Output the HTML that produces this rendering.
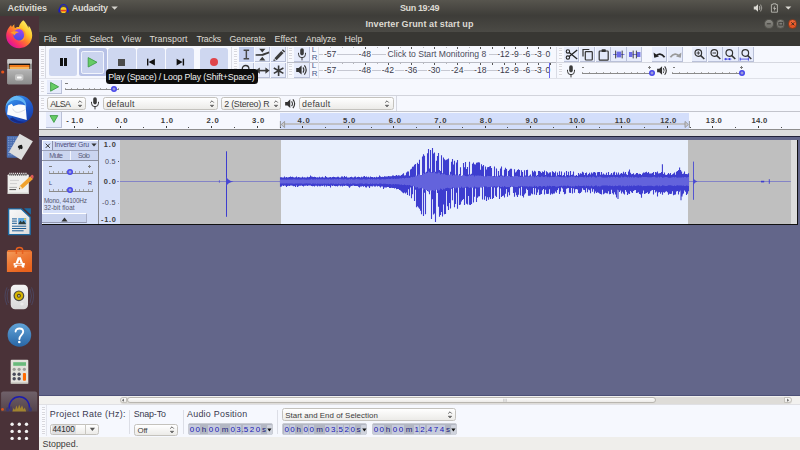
<!DOCTYPE html>
<html><head><meta charset="utf-8"><style>
*{box-sizing:border-box;margin:0;padding:0}
html,body{width:800px;height:450px;overflow:hidden;background:#63668a;font-family:"Liberation Sans",sans-serif;}
.a{position:absolute}
.t{white-space:nowrap}
#top{left:0;top:0;width:800px;height:16px;background:linear-gradient(#57554e,#3d3c38)}
#dock{left:0;top:16px;width:38.9px;height:434px;background:#4a3238}
#title{left:39px;top:16px;width:761px;height:16px;background:linear-gradient(#3e3d39,#4b4a45)}
#menu{left:39px;top:32px;width:761px;height:13.7px;background:#383733}
#tb{left:39px;top:45.7px;width:761px;height:66.3px;background:#f6f8fe}
.btn{position:absolute;background:#ced7f0;border-radius:2.5px}
.tbtn{position:absolute;background:#e7ecfb;border-right:1px solid #b9c0d8;border-bottom:1px solid #b9c0d8;width:15.3px;height:15px}
.grab{position:absolute;width:3.2px;margin-left:0.5px;background:repeating-linear-gradient(#d8d8de 0,#d8d8de 1px,#fbfbfe 1px,#fbfbfe 2.4px)}
#tl{left:39px;top:112px;width:761px;height:18px;background:#f6f8fe}
#tracks{left:39px;top:137px;width:761px;height:259px;background:#63668a}
#bot{left:39px;top:404px;width:761px;height:33px;background:#f6f8fe}
#status{left:39px;top:437px;width:761px;height:13px;background:#efeeeb}
.combo{position:absolute;border:1px solid #c4c2bd;border-radius:2.5px;background:linear-gradient(#ffffff,#ecebe8)}
.tc{position:absolute;background:#b9bdca;border-radius:1px}
</style></head><body>
<div class="a" id="top"></div>
<span class="a t" style="left:7.50px;top:4.00px;font-size:9px;line-height:9px;letter-spacing:-0.057px;color:#dddbd4;font-weight:bold;">Activities</span>
<span class="a t" style="left:71.80px;top:4.00px;font-size:9px;line-height:9px;letter-spacing:-0.258px;color:#dddbd4;font-weight:bold;">Audacity</span>
<span class="a t" style="left:400.00px;top:3.80px;font-size:9px;line-height:9px;letter-spacing:-0.390px;color:#dddbd4;font-weight:bold;">Sun 19:49</span>
<div class="a" id="dock"></div>
<svg class="a" style="left:0;top:0" width="40" height="450" viewBox="0 0 40 450"><defs>
<linearGradient id="ffg" x1="0.92" y1="0.12" x2="0.22" y2="0.95"><stop offset="0" stop-color="#fff36a"/><stop offset="0.32" stop-color="#ffc52a"/><stop offset="0.55" stop-color="#ff7a2e"/><stop offset="0.78" stop-color="#fb3560"/><stop offset="1" stop-color="#dc10a0"/></linearGradient>
<linearGradient id="ffb" x1="0.6" y1="0" x2="0.4" y2="1"><stop offset="0" stop-color="#a440f4"/><stop offset="1" stop-color="#4050e4"/></linearGradient>
<linearGradient id="fil" x1="0" y1="0" x2="0" y2="1"><stop offset="0" stop-color="#b4b4b4"/><stop offset="1" stop-color="#8c8c8c"/></linearGradient>
<linearGradient id="tbd" x1="0.2" y1="0" x2="0.8" y2="1"><stop offset="0" stop-color="#3a9af0"/><stop offset="0.45" stop-color="#2462d2"/><stop offset="1" stop-color="#1438a4"/></linearGradient>
<linearGradient id="sw" x1="0" y1="0" x2="0.6" y2="1"><stop offset="0" stop-color="#f4a060"/><stop offset="0.5" stop-color="#ee7a36"/><stop offset="1" stop-color="#e8621c"/></linearGradient>
<linearGradient id="hlp" x1="0" y1="0" x2="0" y2="1"><stop offset="0" stop-color="#62a4d8"/><stop offset="1" stop-color="#2866a6"/></linearGradient>
<linearGradient id="act" x1="0" y1="0" x2="0" y2="1"><stop offset="0" stop-color="#70616a"/><stop offset="1" stop-color="#54434a"/></linearGradient>
<linearGradient id="doc" x1="0" y1="0" x2="1" y2="1"><stop offset="0" stop-color="#fafafa"/><stop offset="1" stop-color="#dcdcdc"/></linearGradient>
<linearGradient id="rb" x1="0" y1="0" x2="0" y2="1"><stop offset="0" stop-color="#f4f4f4"/><stop offset="1" stop-color="#d8d8d8"/></linearGradient>
</defs><g transform="translate(0,16)"><path d="M11.1 8.9 C8.6 11.2 6.2 15 6.2 19.8 C6.2 26.8 11.9 32.2 19.2 32.2 C26.6 32.2 32.2 26.8 32.2 19.6 C32.2 15.2 30.6 11.8 28.4 9.6 C28.7 10.6 28.7 11.4 28.5 12 C27.2 9 25.4 6.2 23.3 4.3 C21.4 5.8 19.4 8.4 18.9 11 C17.4 10.8 16 11.3 15 12.2 C14.3 11 14.1 9.6 14.5 8.2 C13.3 8.9 12.5 9.8 12 10.9 C11.4 10.3 11.1 9.6 11.1 8.9Z" fill="url(#ffg)"/><circle cx="19" cy="18.8" r="5.7" fill="url(#ffb)"/><path d="M10.4 17 C12.4 15 16.4 14.8 19 16.6 C17 16.8 15.4 17.8 14.4 19.4 C13.6 18 12.2 17.2 10.4 17Z" fill="#ff9c2c"/><path d="M19.6 12.6 C22.6 12.2 25.6 14.6 25.8 18.6 C25.9 22.6 23.4 25.2 20 25.6 C23 24 24.4 21.6 24 18.6 C23.7 15.8 22 13.6 19.6 12.6Z" fill="#ff9a2e" opacity="0.85"/></g><g transform="translate(0,52)"><rect x="7.3" y="6.9" width="24.6" height="25.4" rx="1.2" fill="#9a9a9a"/><rect x="7.3" y="6.9" width="24.6" height="5" rx="1.2" fill="#cacaca"/><rect x="8.9" y="11.6" width="21.2" height="6" fill="#1c1410"/><rect x="9.5" y="13" width="20" height="2" fill="#f07a1c"/><rect x="9.5" y="15" width="20" height="2.2" fill="#f4b45c"/><rect x="7.3" y="17.4" width="24.6" height="14.9" rx="1" fill="url(#fil)"/><rect x="7.3" y="17.3" width="24.6" height="0.8" fill="#d0d0d8"/><rect x="15" y="22.2" width="8.4" height="6.2" rx="1.6" fill="#c2c2c2"/><rect x="17" y="24.4" width="4.6" height="2" rx="0.6" fill="#fafafa"/><circle cx="2.7" cy="20" r="1.6" fill="#e8541c"/></g><g transform="translate(0,89)"><circle cx="19.3" cy="20.6" r="14" fill="url(#tbd)"/><path d="M16.5 6.8 C10 8 6.2 13 5.6 18 C8 12.6 13 10.4 18 11.2 C22 11.8 25 14.4 26 18.4 C27.2 14 24 8 16.5 6.8Z" fill="#6cc0f8" opacity="0.85"/><path d="M9.5 29.8 C13 33.6 20 35.4 25.4 32.8 C21 33 16 31.6 12.6 28.6Z" fill="#16267e" opacity="0.85"/><path d="M8.2 16.6 L11.6 14.8 L13.4 17.2 C17 15.2 22 15 25.6 16.6 L26.8 31 L7 25.6Z" fill="#fbfbfd"/><path d="M12.6 19.6 C15 24.4 18 24.6 25.6 20.4" stroke="#c0c6d6" stroke-width="0.6" fill="none"/></g><g transform="translate(0,127)"><rect x="6.8" y="9" width="12" height="21.8" rx="0.8" fill="#4a6cae"/><path d="M8 11h9M8 13.4h9M8 15.8h9M8 18.2h9M8 20.6h9M8 23h9M8 25.4h9M8 27.8h9" stroke="#8aa4d4" stroke-width="0.9" stroke-dasharray="1.4 1"/><path d="M19.6 6.7 L32.9 14.2 L21.3 32.9 L8.9 25.3Z" fill="#dedede"/><path d="M20.6 17.4 C22.6 19 23.4 20 22.6 21.2 C22 21.9 21.2 21.8 20.7 21.3 L21.2 22.8 H19.6 L20.1 21.3 C19.6 21.8 18.6 21.9 18.1 21.1 C17.5 19.9 18.8 18.8 20.6 17.4Z" fill="#1a1a1a" transform="rotate(28 20.4 20)"/></g><g transform="translate(0,164)"><rect x="7.6" y="10.4" width="21.2" height="19.6" rx="0.8" fill="#efefed"/><rect x="7.6" y="28.6" width="21.2" height="1.4" fill="#cfcfcb"/><path d="M9.4 10.6H27" stroke="#555" stroke-width="2.2" stroke-dasharray="1 0.9"/><path d="M9.4 9.4H27" stroke="#f4f4f4" stroke-width="1.2" stroke-dasharray="1 0.9"/><path d="M10 16.4H19M10 19.6H17" stroke="#cfcfcf" stroke-width="1"/><path d="M9.4 23.4H17" stroke="#9a9a9a" stroke-width="0.7"/><path d="M9.4 25.6H16" stroke="#3a3a3a" stroke-width="0.9"/><path d="M19 25.2 L20 21.8 L30.2 12.2 L33 15 L22.6 24.4Z" fill="#f0a22e"/><path d="M30.2 12.2 L31.6 11 C32.6 10.4 34 11.8 33.6 13 L33 15Z" fill="#e05a5a"/><path d="M19 25.2 L20 21.8 L22.6 24.4Z" fill="#f4e2c0"/><path d="M19 25.2 L19.4 24 L20.2 24.8Z" fill="#111"/></g><g transform="translate(0,202)"><path d="M8.6 6.9 H21.4 L30.2 15.2 V32.6 H8.6Z" fill="url(#doc)" stroke="#1c6aa2" stroke-width="1.4" stroke-linejoin="round"/><path d="M24 6.3 H30.9 V12.8Z" fill="#1c6aa2"/><path d="M12 16.9H16.9M12 19.1H16.9M12 21.3H16.9" stroke="#1c5c94" stroke-width="1"/><rect x="18.2" y="16" width="8" height="6.2" fill="#5aa4dc"/><path d="M18.2 22.2 L20.4 18.6 L22 20.6 L23.6 18.4 L26.2 22.2Z" fill="#2a3a3a"/><circle cx="25" cy="17.2" r="0.9" fill="#f4d43a"/><path d="M12 24.2H26.2M12 26.5H26.2M12 28.8H23.6" stroke="#1c5c94" stroke-width="1"/></g><g transform="translate(0,239)"><path d="M8 11.2 H30.2 L32 13 V33.1 H6.9 V13Z" fill="url(#sw)"/><path d="M8 11.2 H30.2 L32 13 H6.9Z" fill="#e8702c"/><path d="M16.4 15 V10.8 C16.4 7.6 22.6 7.6 22.6 10.8 V15" stroke="#e8601e" stroke-width="1.5" fill="none"/><path d="M17.8 18.2 H20.8 L24.6 28.6 H22 L19.3 20.6 L16.6 28.6 H14Z" fill="#fff"/><rect x="13.6" y="24" width="11.2" height="2.6" fill="#fff"/><rect x="15.4" y="24.8" width="6.4" height="0.9" fill="#ea6a24"/></g><g transform="translate(0,277)"><path d="M8.6 12 Q5.6 19 8.6 26 M7 10.4 Q3 19 7 28" stroke="#4c4e6e" stroke-width="0.7" fill="none"/><path d="M30 12 Q33 19 30 26 M31.6 10.4 Q35.6 19 31.6 28" stroke="#4c4e6e" stroke-width="0.7" fill="none"/><rect x="10.7" y="7.8" width="17.3" height="24.4" rx="4.4" fill="url(#rb)"/><circle cx="18.9" cy="18.8" r="5.4" fill="#4a4a48"/><circle cx="18.9" cy="18.8" r="4.2" fill="#d8b600"/><circle cx="18.9" cy="18.8" r="2" fill="#5a4c10"/><circle cx="18.9" cy="18.8" r="0.9" fill="#c4c4c4"/><circle cx="22" cy="27" r="1.6" fill="#ececec"/></g><g transform="translate(0,315)"><circle cx="19.4" cy="20" r="11.8" fill="url(#hlp)"/><path d="M15.6 16.6 C15.6 12.4 23.2 12.4 23.2 16.8 C23.2 19.6 19.6 20.4 19.4 24" stroke="#fff" stroke-width="1.9" fill="none" stroke-linecap="round"/><circle cx="19.3" cy="27" r="1.3" fill="#fff"/></g><g transform="translate(0,352)"><rect x="10.7" y="7.8" width="17.6" height="24" rx="1" fill="#e4e2dc"/><rect x="10.7" y="30.6" width="17.6" height="1.2" rx="0.6" fill="#bab8b0"/><rect x="13.2" y="10.2" width="12.8" height="3.6" fill="#6aba7c"/><circle cx="14.2" cy="17.3" r="1.6" fill="#9c9c98"/><circle cx="19.1" cy="17.3" r="1.6" fill="#9c9c98"/><circle cx="24.4" cy="17.3" r="1.6" fill="#9c9c98"/><circle cx="14.2" cy="22.2" r="1.7" fill="#4a4a5a"/><circle cx="19.1" cy="22.2" r="1.7" fill="#4a4a5a"/><circle cx="14.2" cy="26.8" r="1.7" fill="#4a4a5a"/><circle cx="19.1" cy="26.8" r="1.7" fill="#4a4a5a"/><rect x="22.9" y="20.9" width="3.1" height="7.8" rx="0.9" fill="#ff6a00"/></g><path d="M1.1 393.6 Q1.1 391.4 3.3 391.4 H35 Q37.2 391.4 37.2 393.6 V411.6 H1.1Z" fill="url(#act)"/><path d="M9 409 C9 392.6 29.6 392.6 29.6 409" stroke="#1c1cae" stroke-width="1.5" fill="none"/><ellipse cx="7.8" cy="409.4" rx="1.8" ry="2.2" fill="#3a3870"/><ellipse cx="30.2" cy="409.4" rx="1.8" ry="2.2" fill="#3a3870"/><path d="M12.4 411.6 L13.6 408 L15 410 L16.4 405.6 L17.8 409 L19.2 404.4 L20.6 408.6 L22 405.2 L23.6 409.6 L24.8 407.6 L26.2 411.6Z" fill="#a88a2c" opacity="0.92"/><path d="M11 406.4 V411.6" stroke="#2a2a8a" stroke-width="0.8"/><circle cx="2.5" cy="409.4" r="1.4" fill="#d8541c"/><circle cx="12.1" cy="424.3" r="1.7" fill="#f4f4f4"/><circle cx="19.3" cy="424.3" r="1.7" fill="#f4f4f4"/><circle cx="26.5" cy="424.3" r="1.7" fill="#f4f4f4"/><circle cx="12.1" cy="431.4" r="1.7" fill="#f4f4f4"/><circle cx="19.3" cy="431.4" r="1.7" fill="#f4f4f4"/><circle cx="26.5" cy="431.4" r="1.7" fill="#f4f4f4"/><circle cx="12.1" cy="438.4" r="1.7" fill="#f4f4f4"/><circle cx="19.3" cy="438.4" r="1.7" fill="#f4f4f4"/><circle cx="26.5" cy="438.4" r="1.7" fill="#f4f4f4"/></svg>
<div class="a" id="title"></div>
<span class="a t" style="left:365.40px;top:19.60px;font-size:9px;line-height:9px;letter-spacing:0.079px;color:#dedbd3;font-weight:bold;">Inverter Grunt at start up</span>
<div class="a" id="menu"></div>
<span class="a t" style="left:43.70px;top:34.70px;font-size:8.8px;line-height:8.8px;letter-spacing:-0.293px;color:#dedbd3;font-weight:normal;">File</span>
<span class="a t" style="left:65.60px;top:34.70px;font-size:8.8px;line-height:8.8px;letter-spacing:-0.005px;color:#dedbd3;font-weight:normal;">Edit</span>
<span class="a t" style="left:89.60px;top:34.70px;font-size:8.8px;line-height:8.8px;letter-spacing:-0.212px;color:#dedbd3;font-weight:normal;">Select</span>
<span class="a t" style="left:121.70px;top:34.70px;font-size:8.8px;line-height:8.8px;letter-spacing:0.195px;color:#dedbd3;font-weight:normal;">View</span>
<span class="a t" style="left:149.40px;top:34.70px;font-size:8.8px;line-height:8.8px;letter-spacing:0.096px;color:#dedbd3;font-weight:normal;">Transport</span>
<span class="a t" style="left:196.40px;top:34.70px;font-size:8.8px;line-height:8.8px;letter-spacing:-0.255px;color:#dedbd3;font-weight:normal;">Tracks</span>
<span class="a t" style="left:229.60px;top:34.70px;font-size:8.8px;line-height:8.8px;letter-spacing:-0.084px;color:#dedbd3;font-weight:normal;">Generate</span>
<span class="a t" style="left:274.50px;top:34.70px;font-size:8.8px;line-height:8.8px;letter-spacing:0.032px;color:#dedbd3;font-weight:normal;">Effect</span>
<span class="a t" style="left:305.70px;top:34.70px;font-size:8.8px;line-height:8.8px;letter-spacing:-0.135px;color:#dedbd3;font-weight:normal;">Analyze</span>
<span class="a t" style="left:344.50px;top:34.70px;font-size:8.8px;line-height:8.8px;letter-spacing:-0.100px;color:#dedbd3;font-weight:normal;">Help</span>
<div class="a" id="tb"></div>
<div class="grab" style="left:40.6px;top:48.5px;height:27px"></div>
<div class="a" style="left:45.2px;top:46.2px;width:0.8px;height:31.5px;background:#d6d8e0"></div>
<div class="btn" style="left:49px;top:48px;width:28.1px;height:28px"></div>
<div class="btn" style="left:78.8px;top:48px;width:28.1px;height:28px;background:#b7c1e6"></div>
<div class="a" style="left:81.2px;top:50.7px;width:22.8px;height:23px;background:#cbd4ef;border:1.1px solid #f2f5fd;border-radius:2.2px"></div>
<div class="btn" style="left:107.9px;top:48px;width:28.1px;height:28px"></div>
<div class="btn" style="left:136.9px;top:48px;width:28.1px;height:28px"></div>
<div class="btn" style="left:166.1px;top:48px;width:28.1px;height:28px"></div>
<div class="btn" style="left:200px;top:48px;width:28.1px;height:28px"></div>
<div class="a" style="left:59.5px;top:58px;width:3px;height:8px;background:#111"></div>
<div class="a" style="left:64.1px;top:58px;width:3px;height:8px;background:#111"></div>
<svg class="a" style="left:86.3px;top:56px" width="14" height="13" viewBox="0 0 14 13"><path d="M2.2 1.6 L11 6.3 L2.2 11 Z" fill="#66cc66" stroke="#3f9d48" stroke-width="0.9" stroke-linejoin="round"/></svg>
<div class="a" style="left:118px;top:58.7px;width:7px;height:7px;background:#4c4c4c"></div>
<svg class="a" style="left:145px;top:57px" width="12" height="10" viewBox="0 0 12 10"><rect x="2" y="1.7" width="1.4" height="6.8" fill="#111"/><path d="M3.6 5.1 L9.9 1.7 L9.9 8.5 Z" fill="#111"/></svg>
<svg class="a" style="left:174px;top:57px" width="12" height="10" viewBox="0 0 12 10"><rect x="8.7" y="1.7" width="1.4" height="6.8" fill="#111"/><path d="M8.6 5.1 L2.6 1.7 L2.6 8.5 Z" fill="#111"/></svg>
<div class="a" style="left:210px;top:58.1px;width:8px;height:8px;border-radius:50%;background:#e0454a"></div>
<div class="a" style="left:39px;top:77.7px;width:193px;height:1px;background:#e2e4ec"></div>
<div class="a" style="left:231.2px;top:46.5px;width:1px;height:31.5px;background:#d9dbe4"></div>
<div class="grab" style="left:233.2px;top:48.5px;height:27px"></div>
<div class="tbtn" style="left:239px;top:46.8px;background:#c3ceee;border-color:#c3ceee"></div>
<div class="tbtn" style="left:254.8px;top:46.8px"></div>
<div class="tbtn" style="left:270.6px;top:46.8px"></div>
<div class="tbtn" style="left:239px;top:62.7px"></div>
<div class="tbtn" style="left:254.8px;top:62.7px"></div>
<div class="tbtn" style="left:270.6px;top:62.7px"></div>
<svg class="a" style="left:239px;top:46.8px" width="15" height="15" viewBox="0 0 15 15"><path d="M4.6 3.3 H10.1 M4.6 11.7 H10.1 M7.35 3.3 V11.7" stroke="#484848" stroke-width="1.45" fill="none"/></svg>
<svg class="a" style="left:254.8px;top:46.8px" width="15" height="15" viewBox="0 0 15 15"><path d="M4.2 1.8 H10.4 L7.3 5.4 Z M4.2 13.4 H10.4 L7.3 9.8 Z" fill="#3a3a3a"/><path d="M0.6 8 L8 7.8" stroke="#3a3a3a" stroke-width="1.7" fill="none"/><path d="M7.4 6.8 L14 4.6 L14.3 6.2 L8 8.8Z" fill="#3a3a3a"/></svg>
<svg class="a" style="left:270.6px;top:46.8px" width="15" height="15" viewBox="0 0 15 15"><path d="M3.4 11.2 L10.2 3.9 L12.6 6.1 L5.6 13.2 Z" fill="#3c3c3c"/><path d="M10.8 3.3 L11.9 2.2 L14.2 4.4 L13.2 5.5Z" fill="#3c3c3c"/><path d="M2.9 11.9 L2.3 14 L4.8 13.6Z" fill="#3c3c3c"/></svg>
<svg class="a" style="left:239px;top:62.7px" width="15" height="15" viewBox="0 0 15 15"><circle cx="6.6" cy="5.8" r="3.3" stroke="#333" stroke-width="1.3" fill="none"/><path d="M9 8.4 L12.5 12.3" stroke="#333" stroke-width="1.7"/></svg>
<svg class="a" style="left:254.8px;top:62.7px" width="15" height="15" viewBox="0 0 15 15"><path d="M2.4 7.6 H12.8" stroke="#3a3a3a" stroke-width="1.6"/><path d="M0.6 7.6 L4.8 4.4 V10.8Z M14.6 7.6 L10.4 4.4 V10.8Z" fill="#3a3a3a"/></svg>
<svg class="a" style="left:270.6px;top:62.7px" width="15" height="15" viewBox="0 0 15 15"><path d="M7.6 2.4 V13 M2.8 5 L12.4 10.4 M12.4 5 L2.8 10.4" stroke="#3a3a3a" stroke-width="1.6" fill="none"/></svg>
<div class="a" style="left:287.3px;top:46.5px;width:1px;height:31.5px;background:#d9dbe4"></div>
<div class="a" style="left:287.3px;top:62px;width:269px;height:1px;background:#b9bbc4"></div>
<div class="a" style="left:287.3px;top:78px;width:269px;height:1px;background:#dcdee6"></div>
<div class="a" style="left:555.9px;top:46.5px;width:1px;height:31.5px;background:#d9dbe4"></div>
<div class="grab" style="left:288.8px;top:48.3px;height:12px"></div>
<div class="tbtn" style="left:293.8px;top:46.8px;width:16px;height:15px;background:#e6ebfb"></div>
<div class="grab" style="left:288.8px;top:64.2px;height:12px"></div>
<div class="tbtn" style="left:293.8px;top:62.7px;width:16px;height:15px;background:#e6ebfb"></div>
<svg class="a" style="left:295.7px;top:48.2px" width="12" height="13" viewBox="0 0 12 13"><rect x="4.2" y="0.2" width="3.6" height="7.2" rx="1.8" fill="#3a3a3a"/><path d="M2.5 4.8 v1.4 a3.5 3.5 0 0 0 7 0 v-1.4" stroke="#3a3a3a" stroke-width="1" fill="none"/><path d="M6 9.6 v2.8" stroke="#3a3a3a" stroke-width="1"/></svg>
<svg class="a" style="left:295.1px;top:64.4px" width="13.0" height="12.0" viewBox="0 0 13 12"><path d="M1.2 4.1 H3.6 L6.6 1.4 V10.6 L3.6 7.9 H1.2Z" fill="#333"/><path d="M8 3.4 Q9.8 6 8 8.6" stroke="#333" stroke-width="1.1" fill="none"/><path d="M9.4 1.4 Q13 6 9.4 10.6" stroke="#333" stroke-width="1.2" fill="none"/></svg>
<span class="a t" style="left:311.80px;top:46.14px;font-size:7.9px;line-height:7.9px;letter-spacing:-1.094px;color:#4a5a8a;font-weight:normal;">L</span>
<span class="a t" style="left:311.80px;top:54.34px;font-size:7.9px;line-height:7.9px;letter-spacing:-1.405px;color:#4a5a8a;font-weight:normal;">R</span>
<span class="a t" style="left:311.80px;top:62.04px;font-size:7.9px;line-height:7.9px;letter-spacing:-1.094px;color:#4a5a8a;font-weight:normal;">L</span>
<span class="a t" style="left:311.80px;top:70.24px;font-size:7.9px;line-height:7.9px;letter-spacing:-1.405px;color:#4a5a8a;font-weight:normal;">R</span>
<div class="a" style="left:317.6px;top:46.8px;width:1px;height:31px;background:#e3e5ec"></div>
<div class="a" style="left:318.5px;top:54.099999999999994px;width:231.5px;height:1px;background:#c6c8d2"></div>
<div class="a" style="left:330.2px;top:47.3px;width:0.8px;height:1.0px;background:#b4b4b8"></div>
<div class="a" style="left:341.8px;top:47.3px;width:0.8px;height:1.0px;background:#b4b4b8"></div>
<div class="a" style="left:353.4px;top:47.3px;width:0.8px;height:1.0px;background:#b4b4b8"></div>
<div class="a" style="left:364.9px;top:47.3px;width:0.8px;height:1.4px;background:#555"></div>
<div class="a" style="left:376.5px;top:47.3px;width:0.8px;height:1.0px;background:#b4b4b8"></div>
<div class="a" style="left:388.0px;top:47.3px;width:0.8px;height:1.4px;background:#555"></div>
<div class="a" style="left:399.6px;top:47.3px;width:0.8px;height:1.0px;background:#b4b4b8"></div>
<div class="a" style="left:411.1px;top:47.3px;width:0.8px;height:1.4px;background:#555"></div>
<div class="a" style="left:422.7px;top:47.3px;width:0.8px;height:1.0px;background:#b4b4b8"></div>
<div class="a" style="left:434.2px;top:47.3px;width:0.8px;height:1.4px;background:#555"></div>
<div class="a" style="left:445.8px;top:47.3px;width:0.8px;height:1.0px;background:#b4b4b8"></div>
<div class="a" style="left:457.3px;top:47.3px;width:0.8px;height:1.4px;background:#555"></div>
<div class="a" style="left:468.9px;top:47.3px;width:0.8px;height:1.0px;background:#b4b4b8"></div>
<div class="a" style="left:480.4px;top:47.3px;width:0.8px;height:1.4px;background:#555"></div>
<div class="a" style="left:492.0px;top:47.3px;width:0.8px;height:1.4px;background:#555"></div>
<div class="a" style="left:503.5px;top:47.3px;width:0.8px;height:1.4px;background:#555"></div>
<div class="a" style="left:515.1px;top:47.3px;width:0.8px;height:1.4px;background:#555"></div>
<div class="a" style="left:526.6px;top:47.3px;width:0.8px;height:1.4px;background:#555"></div>
<div class="a" style="left:538.2px;top:47.3px;width:0.8px;height:1.4px;background:#555"></div>
<div class="a" style="left:549.7px;top:47.3px;width:0.8px;height:1.4px;background:#555"></div>
<div class="a" style="left:323.3px;top:50.8px;width:13.6px;height:7px;background:#f6f8fe"></div>
<span class="a t" style="left:323.94px;top:50.20px;font-size:8.6px;line-height:8.6px;letter-spacing:0.000px;color:#3a3a4a;font-weight:normal;">-57</span>
<div class="a" style="left:358.0px;top:50.8px;width:13.6px;height:7px;background:#f6f8fe"></div>
<span class="a t" style="left:358.59px;top:50.20px;font-size:8.6px;line-height:8.6px;letter-spacing:0.000px;color:#3a3a4a;font-weight:normal;">-48</span>
<div class="a" style="left:496.6px;top:50.8px;width:13.6px;height:7px;background:#f6f8fe"></div>
<span class="a t" style="left:497.19px;top:50.20px;font-size:8.6px;line-height:8.6px;letter-spacing:0.000px;color:#3a3a4a;font-weight:normal;">-12</span>
<div class="a" style="left:510.5px;top:50.8px;width:8.8px;height:7px;background:#f6f8fe"></div>
<span class="a t" style="left:511.13px;top:50.20px;font-size:8.6px;line-height:8.6px;letter-spacing:0.000px;color:#3a3a4a;font-weight:normal;">-9</span>
<div class="a" style="left:522.1px;top:50.8px;width:8.8px;height:7px;background:#f6f8fe"></div>
<span class="a t" style="left:522.68px;top:50.20px;font-size:8.6px;line-height:8.6px;letter-spacing:0.000px;color:#3a3a4a;font-weight:normal;">-6</span>
<div class="a" style="left:533.6px;top:50.8px;width:8.8px;height:7px;background:#f6f8fe"></div>
<span class="a t" style="left:534.23px;top:50.20px;font-size:8.6px;line-height:8.6px;letter-spacing:0.000px;color:#3a3a4a;font-weight:normal;">-3</span>
<div class="a" style="left:544.9px;top:50.8px;width:6.0px;height:7px;background:#f6f8fe"></div>
<span class="a t" style="left:545.51px;top:50.20px;font-size:8.6px;line-height:8.6px;letter-spacing:-0.000px;color:#3a3a4a;font-weight:normal;">0</span>
<div class="a" style="left:318.5px;top:70.0px;width:231.5px;height:1px;background:#c6c8d2"></div>
<div class="a" style="left:330.2px;top:63.2px;width:0.8px;height:1.0px;background:#b4b4b8"></div>
<div class="a" style="left:341.8px;top:63.2px;width:0.8px;height:1.0px;background:#b4b4b8"></div>
<div class="a" style="left:353.4px;top:63.2px;width:0.8px;height:1.0px;background:#b4b4b8"></div>
<div class="a" style="left:364.9px;top:63.2px;width:0.8px;height:1.4px;background:#555"></div>
<div class="a" style="left:376.5px;top:63.2px;width:0.8px;height:1.0px;background:#b4b4b8"></div>
<div class="a" style="left:388.0px;top:63.2px;width:0.8px;height:1.4px;background:#555"></div>
<div class="a" style="left:399.6px;top:63.2px;width:0.8px;height:1.0px;background:#b4b4b8"></div>
<div class="a" style="left:411.1px;top:63.2px;width:0.8px;height:1.4px;background:#555"></div>
<div class="a" style="left:422.7px;top:63.2px;width:0.8px;height:1.0px;background:#b4b4b8"></div>
<div class="a" style="left:434.2px;top:63.2px;width:0.8px;height:1.4px;background:#555"></div>
<div class="a" style="left:445.8px;top:63.2px;width:0.8px;height:1.0px;background:#b4b4b8"></div>
<div class="a" style="left:457.3px;top:63.2px;width:0.8px;height:1.4px;background:#555"></div>
<div class="a" style="left:468.9px;top:63.2px;width:0.8px;height:1.0px;background:#b4b4b8"></div>
<div class="a" style="left:480.4px;top:63.2px;width:0.8px;height:1.4px;background:#555"></div>
<div class="a" style="left:492.0px;top:63.2px;width:0.8px;height:1.4px;background:#555"></div>
<div class="a" style="left:503.5px;top:63.2px;width:0.8px;height:1.4px;background:#555"></div>
<div class="a" style="left:515.1px;top:63.2px;width:0.8px;height:1.4px;background:#555"></div>
<div class="a" style="left:526.6px;top:63.2px;width:0.8px;height:1.4px;background:#555"></div>
<div class="a" style="left:538.2px;top:63.2px;width:0.8px;height:1.4px;background:#555"></div>
<div class="a" style="left:549.7px;top:63.2px;width:0.8px;height:1.4px;background:#555"></div>
<div class="a" style="left:323.3px;top:66.7px;width:13.6px;height:7px;background:#f6f8fe"></div>
<span class="a t" style="left:323.94px;top:66.10px;font-size:8.6px;line-height:8.6px;letter-spacing:0.000px;color:#3a3a4a;font-weight:normal;">-57</span>
<div class="a" style="left:358.0px;top:66.7px;width:13.6px;height:7px;background:#f6f8fe"></div>
<span class="a t" style="left:358.59px;top:66.10px;font-size:8.6px;line-height:8.6px;letter-spacing:0.000px;color:#3a3a4a;font-weight:normal;">-48</span>
<div class="a" style="left:381.1px;top:66.7px;width:13.6px;height:7px;background:#f6f8fe"></div>
<span class="a t" style="left:381.69px;top:66.10px;font-size:8.6px;line-height:8.6px;letter-spacing:0.000px;color:#3a3a4a;font-weight:normal;">-42</span>
<div class="a" style="left:404.2px;top:66.7px;width:13.6px;height:7px;background:#f6f8fe"></div>
<span class="a t" style="left:404.79px;top:66.10px;font-size:8.6px;line-height:8.6px;letter-spacing:0.000px;color:#3a3a4a;font-weight:normal;">-36</span>
<div class="a" style="left:427.3px;top:66.7px;width:13.6px;height:7px;background:#f6f8fe"></div>
<span class="a t" style="left:427.89px;top:66.10px;font-size:8.6px;line-height:8.6px;letter-spacing:0.000px;color:#3a3a4a;font-weight:normal;">-30</span>
<div class="a" style="left:450.4px;top:66.7px;width:13.6px;height:7px;background:#f6f8fe"></div>
<span class="a t" style="left:450.99px;top:66.10px;font-size:8.6px;line-height:8.6px;letter-spacing:0.000px;color:#3a3a4a;font-weight:normal;">-24</span>
<div class="a" style="left:473.5px;top:66.7px;width:13.6px;height:7px;background:#f6f8fe"></div>
<span class="a t" style="left:474.09px;top:66.10px;font-size:8.6px;line-height:8.6px;letter-spacing:0.000px;color:#3a3a4a;font-weight:normal;">-18</span>
<div class="a" style="left:496.6px;top:66.7px;width:13.6px;height:7px;background:#f6f8fe"></div>
<span class="a t" style="left:497.19px;top:66.10px;font-size:8.6px;line-height:8.6px;letter-spacing:0.000px;color:#3a3a4a;font-weight:normal;">-12</span>
<div class="a" style="left:510.5px;top:66.7px;width:8.8px;height:7px;background:#f6f8fe"></div>
<span class="a t" style="left:511.13px;top:66.10px;font-size:8.6px;line-height:8.6px;letter-spacing:0.000px;color:#3a3a4a;font-weight:normal;">-9</span>
<div class="a" style="left:522.1px;top:66.7px;width:8.8px;height:7px;background:#f6f8fe"></div>
<span class="a t" style="left:522.68px;top:66.10px;font-size:8.6px;line-height:8.6px;letter-spacing:0.000px;color:#3a3a4a;font-weight:normal;">-6</span>
<div class="a" style="left:533.6px;top:66.7px;width:8.8px;height:7px;background:#f6f8fe"></div>
<span class="a t" style="left:534.23px;top:66.10px;font-size:8.6px;line-height:8.6px;letter-spacing:0.000px;color:#3a3a4a;font-weight:normal;">-3</span>
<div class="a" style="left:544.9px;top:66.7px;width:6.0px;height:7px;background:#f6f8fe"></div>
<span class="a t" style="left:545.51px;top:66.10px;font-size:8.6px;line-height:8.6px;letter-spacing:-0.000px;color:#3a3a4a;font-weight:normal;">0</span>
<div class="a" style="left:386px;top:50.5px;width:103px;height:7.5px;background:#f6f8fe"></div>
<span class="a t" style="left:387.60px;top:50.20px;font-size:8.6px;line-height:8.6px;letter-spacing:0.009px;color:#4a4a5a;font-weight:normal;">Click to Start Monitoring 8</span>
<div class="a" style="left:549.4px;top:63px;width:1px;height:14.8px;background:#6666f0"></div>
<div class="grab" style="left:558.4px;top:48.3px;height:12px"></div>
<div class="tbtn" style="left:564px;top:46.8px;height:15px;width:15.2px"></div>
<div class="tbtn" style="left:579.8px;top:46.8px;height:15px;width:15.2px"></div>
<div class="tbtn" style="left:595.6px;top:46.8px;height:15px;width:15.2px"></div>
<div class="tbtn" style="left:611.4px;top:46.8px;height:15px;width:15.2px"></div>
<div class="tbtn" style="left:627.2px;top:46.8px;height:15px;width:15.2px"></div>
<div class="tbtn" style="left:651.7px;top:46.8px;height:15px;width:15.2px"></div>
<div class="tbtn" style="left:667.5px;top:46.8px;height:15px;width:15.2px"></div>
<div class="tbtn" style="left:691.8px;top:46.8px;height:15px;width:15.2px"></div>
<div class="tbtn" style="left:707.6px;top:46.8px;height:15px;width:15.2px"></div>
<div class="tbtn" style="left:723.4px;top:46.8px;height:15px;width:15.2px"></div>
<div class="tbtn" style="left:739.2px;top:46.8px;height:15px;width:15.2px"></div>
<svg class="a" style="left:564px;top:46.8px" width="15" height="15" viewBox="0 0 15 15"><circle cx="3.9" cy="4.4" r="1.7" stroke="#222" stroke-width="1.1" fill="none"/><circle cx="3.9" cy="10.6" r="1.7" stroke="#222" stroke-width="1.1" fill="none"/><path d="M5.2 5.5 L13.2 12 M5.2 9.5 L13.2 3" stroke="#222" stroke-width="1.3" fill="none"/></svg>
<svg class="a" style="left:579.8px;top:46.8px" width="15" height="15" viewBox="0 0 15 15"><path d="M3 9.5 V2.5 H9.3" stroke="#333" stroke-width="1.2" fill="none"/><rect x="5.3" y="4.7" width="7" height="8.3" rx="0.8" stroke="#333" stroke-width="1.2" fill="#e3e9fa"/></svg>
<svg class="a" style="left:595.6px;top:46.8px" width="15" height="15" viewBox="0 0 15 15"><rect x="3.2" y="4" width="9" height="9.2" rx="0.8" stroke="#333" stroke-width="1.2" fill="#e3e9fa"/><rect x="5.6" y="2.2" width="4.2" height="2.8" rx="0.7" fill="#333"/></svg>
<svg class="a" style="left:611.4px;top:46.8px" width="15" height="15" viewBox="0 0 15 15"><path d="M2 7.5 H13.5" stroke="#5b5be0" stroke-width="0.8"/><rect x="5.6" y="4.6" width="4.6" height="5.8" fill="#6c6ce6"/><path d="M4.6 3.6 V11.4 M11.2 3.6 V11.4" stroke="#333" stroke-width="0.9"/></svg>
<svg class="a" style="left:627.2px;top:46.8px" width="15" height="15" viewBox="0 0 15 15"><rect x="2" y="5" width="3.4" height="5" fill="#6c6ce6"/><rect x="10" y="5" width="3.4" height="5" fill="#6c6ce6"/><path d="M5.4 7.5 H10" stroke="#5b5be0" stroke-width="0.8"/><path d="M6.2 3.6 V11.4 M9.4 3.6 V11.4" stroke="#333" stroke-width="0.9"/></svg>
<svg class="a" style="left:651.7px;top:46.8px" width="15" height="15" viewBox="0 0 15 15"><path d="M3.2 9.6 Q8 4.2 12.6 10.2" stroke="#222" stroke-width="1.8" fill="none"/><path d="M1.6 5.4 L2.2 10.8 L7 9.4Z" fill="#222"/></svg>
<svg class="a" style="left:667.5px;top:46.8px" width="15" height="15" viewBox="0 0 15 15"><path d="M11.8 9.6 Q7 4.2 2.4 10.2" stroke="#9a9a9a" stroke-width="1.8" fill="none"/><path d="M13.4 5.4 L12.8 10.8 L8 9.4Z" fill="#9a9a9a"/></svg>
<svg class="a" style="left:691.8px;top:46.8px" width="15" height="15" viewBox="0 0 15 15"><circle cx="6.3" cy="6" r="3.3" stroke="#333" stroke-width="1.2" fill="none"/><path d="M8.8 8.6 L12.3 12" stroke="#333" stroke-width="1.5"/><path d="M4.5 6 H8.1 M6.3 4.2 V7.8" stroke="#333" stroke-width="0.9"/></svg>
<svg class="a" style="left:707.6px;top:46.8px" width="15" height="15" viewBox="0 0 15 15"><circle cx="6.3" cy="6" r="3.3" stroke="#333" stroke-width="1.2" fill="none"/><path d="M8.8 8.6 L12.3 12" stroke="#333" stroke-width="1.5"/><path d="M4.5 6 H8.1" stroke="#333" stroke-width="1"/></svg>
<svg class="a" style="left:723.4px;top:46.8px" width="15" height="15" viewBox="0 0 15 15"><circle cx="6.3" cy="6" r="3.3" stroke="#333" stroke-width="1.2" fill="none"/><path d="M8.8 8.6 L12.3 12" stroke="#333" stroke-width="1.5"/><path d="M1 12.1 H8.4" stroke="#3838e0" stroke-width="0.7"/><path d="M4.2 12.1 L2.2 10.7 V13.5Z M5 12.1 L7.2 10.7 V13.5Z" fill="#3838e0"/></svg>
<svg class="a" style="left:739.2px;top:46.8px" width="15" height="15" viewBox="0 0 15 15"><circle cx="6.3" cy="6" r="3.3" stroke="#333" stroke-width="1.2" fill="none"/><path d="M8.8 8.6 L12.3 12" stroke="#333" stroke-width="1.5"/><path d="M1.2 12.1 H9.4" stroke="#3838e0" stroke-width="0.8"/><path d="M1.2 10.6 V13.6 M9.4 10.6 V13.6" stroke="#3838e0" stroke-width="0.9"/></svg>
<div class="a" style="left:556px;top:62px;width:244px;height:1px;background:#d6d8e0"></div>
<div class="a" style="left:232px;top:78.2px;width:568px;height:1px;background:#dfe1e8"></div>
<div class="grab" style="left:558.4px;top:64.2px;height:12px"></div>
<svg class="a" style="left:565.3px;top:65.3px" width="12" height="13" viewBox="0 0 12 13"><rect x="4.2" y="0.2" width="3.6" height="7.2" rx="1.8" fill="#3a3a3a"/><path d="M2.5 4.8 v1.4 a3.5 3.5 0 0 0 7 0 v-1.4" stroke="#3a3a3a" stroke-width="1" fill="none"/><path d="M6 9.6 v2.8" stroke="#3a3a3a" stroke-width="1"/></svg>
<div class="a" style="left:581.6px;top:73.4px;width:70.79999999999995px;height:1px;background:#8a8a8a"></div><div class="a" style="left:581.6px;top:72.0px;width:0.8px;height:1.4px;background:#a6a6a6"></div><div class="a" style="left:588.6px;top:72.0px;width:0.8px;height:1.4px;background:#a6a6a6"></div><div class="a" style="left:595.6px;top:72.0px;width:0.8px;height:1.4px;background:#a6a6a6"></div><div class="a" style="left:602.5px;top:72.0px;width:0.8px;height:1.4px;background:#a6a6a6"></div><div class="a" style="left:609.5px;top:72.0px;width:0.8px;height:1.4px;background:#a6a6a6"></div><div class="a" style="left:616.5px;top:72.0px;width:0.8px;height:1.4px;background:#a6a6a6"></div><div class="a" style="left:623.5px;top:72.0px;width:0.8px;height:1.4px;background:#a6a6a6"></div><div class="a" style="left:630.5px;top:72.0px;width:0.8px;height:1.4px;background:#a6a6a6"></div><div class="a" style="left:637.4px;top:72.0px;width:0.8px;height:1.4px;background:#a6a6a6"></div><div class="a" style="left:644.4px;top:72.0px;width:0.8px;height:1.4px;background:#a6a6a6"></div><div class="a" style="left:651.4px;top:72.0px;width:0.8px;height:1.4px;background:#a6a6a6"></div><div class="a" style="left:581.9px;top:67.0px;width:2.6px;height:0.8px;background:#7c7c7c"></div><div class="a" style="left:647.8px;top:67.0px;width:3px;height:0.8px;background:#7c7c7c"></div><div class="a" style="left:648.9px;top:65.8px;width:0.8px;height:3px;background:#7c7c7c"></div><div class="a" style="left:648.8px;top:70.10000000000001px;width:6px;height:6px;border-radius:50%;background:radial-gradient(circle,#9b9bd8 0,#9b9bd8 22%,#4747ec 45%,#4747ec 100%)"></div>
<svg class="a" style="left:655.52px;top:65.08px" width="11.96" height="11.040000000000001" viewBox="0 0 13 12"><path d="M1.2 4.1 H3.6 L6.6 1.4 V10.6 L3.6 7.9 H1.2Z" fill="#333"/><path d="M8 3.4 Q9.8 6 8 8.6" stroke="#333" stroke-width="1.1" fill="none"/><path d="M9.4 1.4 Q13 6 9.4 10.6" stroke="#333" stroke-width="1.2" fill="none"/></svg>
<div class="a" style="left:672.3px;top:73.4px;width:72.10000000000002px;height:1px;background:#8a8a8a"></div><div class="a" style="left:672.3px;top:72.0px;width:0.8px;height:1.4px;background:#a6a6a6"></div><div class="a" style="left:679.4px;top:72.0px;width:0.8px;height:1.4px;background:#a6a6a6"></div><div class="a" style="left:686.5px;top:72.0px;width:0.8px;height:1.4px;background:#a6a6a6"></div><div class="a" style="left:693.6px;top:72.0px;width:0.8px;height:1.4px;background:#a6a6a6"></div><div class="a" style="left:700.7px;top:72.0px;width:0.8px;height:1.4px;background:#a6a6a6"></div><div class="a" style="left:707.8px;top:72.0px;width:0.8px;height:1.4px;background:#a6a6a6"></div><div class="a" style="left:715.0px;top:72.0px;width:0.8px;height:1.4px;background:#a6a6a6"></div><div class="a" style="left:722.1px;top:72.0px;width:0.8px;height:1.4px;background:#a6a6a6"></div><div class="a" style="left:729.2px;top:72.0px;width:0.8px;height:1.4px;background:#a6a6a6"></div><div class="a" style="left:736.3px;top:72.0px;width:0.8px;height:1.4px;background:#a6a6a6"></div><div class="a" style="left:743.4px;top:72.0px;width:0.8px;height:1.4px;background:#a6a6a6"></div><div class="a" style="left:672.5999999999999px;top:67.0px;width:2.6px;height:0.8px;background:#7c7c7c"></div><div class="a" style="left:739.8px;top:67.0px;width:3px;height:0.8px;background:#7c7c7c"></div><div class="a" style="left:740.9px;top:65.8px;width:0.8px;height:3px;background:#7c7c7c"></div><div class="a" style="left:738.8px;top:70.10000000000001px;width:6px;height:6px;border-radius:50%;background:radial-gradient(circle,#9b9bd8 0,#9b9bd8 22%,#4747ec 45%,#4747ec 100%)"></div>
<div class="grab" style="left:40.6px;top:80.5px;height:12px"></div>
<div class="tbtn" style="left:46.8px;top:79.6px;width:15.2px;height:14.8px;background:#e6ebfb"></div>
<svg class="a" style="left:47px;top:80px" width="15" height="14" viewBox="0 0 15 14"><path d="M3.6 2.4 L11.6 6.8 L3.6 11.2 Z" fill="#66cc66" stroke="#3f9d48" stroke-width="0.9" stroke-linejoin="round"/></svg>
<div class="a" style="left:65px;top:89.3px;width:53.8px;height:1px;background:#8a8a8a"></div><div class="a" style="left:65.0px;top:87.89999999999999px;width:0.8px;height:1.4px;background:#a6a6a6"></div><div class="a" style="left:70.9px;top:87.89999999999999px;width:0.8px;height:1.4px;background:#a6a6a6"></div><div class="a" style="left:76.7px;top:87.89999999999999px;width:0.8px;height:1.4px;background:#a6a6a6"></div><div class="a" style="left:82.6px;top:87.89999999999999px;width:0.8px;height:1.4px;background:#a6a6a6"></div><div class="a" style="left:88.5px;top:87.89999999999999px;width:0.8px;height:1.4px;background:#a6a6a6"></div><div class="a" style="left:94.3px;top:87.89999999999999px;width:0.8px;height:1.4px;background:#a6a6a6"></div><div class="a" style="left:100.2px;top:87.89999999999999px;width:0.8px;height:1.4px;background:#a6a6a6"></div><div class="a" style="left:106.1px;top:87.89999999999999px;width:0.8px;height:1.4px;background:#a6a6a6"></div><div class="a" style="left:111.9px;top:87.89999999999999px;width:0.8px;height:1.4px;background:#a6a6a6"></div><div class="a" style="left:117.8px;top:87.89999999999999px;width:0.8px;height:1.4px;background:#a6a6a6"></div><div class="a" style="left:65.3px;top:83.2px;width:2.6px;height:0.8px;background:#7c7c7c"></div><div class="a" style="left:110.7px;top:86.0px;width:6px;height:6px;border-radius:50%;background:radial-gradient(circle,#9b9bd8 0,#9b9bd8 22%,#4747ec 45%,#4747ec 100%)"></div>
<div class="a" style="left:39px;top:95px;width:761px;height:1px;background:#d2d4dc"></div>
<div class="grab" style="left:40.6px;top:98px;height:11px"></div>
<div class="combo" style="left:47.3px;top:96.8px;width:38.5px;height:13.600000000000009px"></div><span class="a t" style="left:50.30px;top:100.20px;font-size:8.8px;line-height:8.8px;letter-spacing:-0.601px;color:#3c3c3c;font-weight:normal;">ALSA</span><svg class="a" style="left:76.6px;top:98.6px" width="6" height="10" viewBox="0 0 6 10"><path d="M1.2 3.6 L3 1.8 L4.8 3.6" stroke="#555" stroke-width="0.9" fill="none"/><path d="M1.2 6.2 L3 8 L4.8 6.2Z" fill="#555" stroke="#555" stroke-width="0.5"/></svg>
<svg class="a" style="left:89px;top:97.4px" width="12" height="13" viewBox="0 0 12 13"><rect x="4.2" y="0.2" width="3.6" height="7.2" rx="1.8" fill="#3a3a3a"/><path d="M2.5 4.8 v1.4 a3.5 3.5 0 0 0 7 0 v-1.4" stroke="#3a3a3a" stroke-width="1" fill="none"/><path d="M6 9.6 v2.8" stroke="#3a3a3a" stroke-width="1"/></svg>
<div class="combo" style="left:102.8px;top:96.8px;width:114.8px;height:13.600000000000009px"></div><span class="a t" style="left:106.40px;top:100.20px;font-size:8.8px;line-height:8.8px;letter-spacing:0.263px;color:#3c3c3c;font-weight:normal;">default</span><svg class="a" style="left:209.2px;top:98.6px" width="6" height="10" viewBox="0 0 6 10"><path d="M1.2 3.6 L3 1.8 L4.8 3.6" stroke="#555" stroke-width="0.9" fill="none"/><path d="M1.2 6.2 L3 8 L4.8 6.2Z" fill="#555" stroke="#555" stroke-width="0.5"/></svg>
<div class="combo" style="left:221.2px;top:96.8px;width:60.0px;height:13.600000000000009px"></div><span class="a t" style="left:224.30px;top:100.20px;font-size:8.8px;line-height:8.8px;letter-spacing:-0.248px;color:#3c3c3c;font-weight:normal;">2 (Stereo) R</span><svg class="a" style="left:272.6px;top:98.6px" width="6" height="10" viewBox="0 0 6 10"><path d="M1.2 3.6 L3 1.8 L4.8 3.6" stroke="#555" stroke-width="0.9" fill="none"/><path d="M1.2 6.2 L3 8 L4.8 6.2Z" fill="#555" stroke="#555" stroke-width="0.5"/></svg>
<svg class="a" style="left:283.625px;top:97.6px" width="12.35" height="11.399999999999999" viewBox="0 0 13 12"><path d="M1.2 4.1 H3.6 L6.6 1.4 V10.6 L3.6 7.9 H1.2Z" fill="#333"/><path d="M8 3.4 Q9.8 6 8 8.6" stroke="#333" stroke-width="1.1" fill="none"/><path d="M9.4 1.4 Q13 6 9.4 10.6" stroke="#333" stroke-width="1.2" fill="none"/></svg>
<div class="combo" style="left:299.2px;top:96.8px;width:94.40000000000003px;height:13.600000000000009px"></div><span class="a t" style="left:302.00px;top:100.20px;font-size:8.8px;line-height:8.8px;letter-spacing:0.296px;color:#3c3c3c;font-weight:normal;">default</span><svg class="a" style="left:384.4px;top:98.6px" width="6" height="10" viewBox="0 0 6 10"><path d="M1.2 3.6 L3 1.8 L4.8 3.6" stroke="#555" stroke-width="0.9" fill="none"/><path d="M1.2 6.2 L3 8 L4.8 6.2Z" fill="#555" stroke="#555" stroke-width="0.5"/></svg>
<div class="a" style="left:396.4px;top:96px;width:1px;height:15.5px;background:#d5d7e0"></div>
<div class="a" id="tl"></div>
<div class="tbtn" style="left:46.2px;top:112.4px;width:15.6px;height:15.4px;background:#e6ebfb"></div>
<svg class="a" style="left:46.2px;top:112.4px" width="16" height="16" viewBox="0 0 16 16"><path d="M4 3.6 L11.8 3.6 L7.9 10.4 Z" fill="#66cc66" stroke="#3f9d48" stroke-width="0.9" stroke-linejoin="round"/></svg>
<div class="a" style="left:39px;top:111.2px;width:761px;height:1px;background:#c2c4cc"></div>
<div class="a" style="left:279.7px;top:112.6px;width:409.3px;height:16.2px;background:#d3defb"></div>
<div class="a" style="left:282.4px;top:123.3px;width:404.1px;height:2.2px;background:#bfc0c6"></div>
<svg class="a" style="left:278.7px;top:120px" width="8" height="9" viewBox="0 0 8 9"><path d="M1.4 1 V8" stroke="#888" stroke-width="0.9"/><path d="M5.6 1.4 V7.6 L2.2 4.5Z" fill="#c8c8cc" stroke="#888" stroke-width="0.7"/></svg>
<svg class="a" style="left:683px;top:120px" width="8" height="9" viewBox="0 0 8 9"><path d="M6.4 1 V8" stroke="#888" stroke-width="0.9"/><path d="M2 1.4 V7.6 L5.4 4.5Z" fill="#c8c8cc" stroke="#888" stroke-width="0.7"/></svg>
<div class="a" style="left:74.4px;top:125.9px;width:0.8px;height:1.9px;background:#3a3a3a"></div>
<span class="a t" style="left:66.30px;top:116.64px;font-size:7.7px;line-height:7.7px;letter-spacing:-0.064px;color:#3c3c3c;font-weight:bold;">-</span>
<span class="a t" style="left:71.20px;top:116.64px;font-size:7.7px;line-height:7.7px;letter-spacing:0.648px;color:#3c3c3c;font-weight:bold;">1.0</span>
<div class="a" style="left:97.2px;top:127.3px;width:0.8px;height:1.2px;background:#4a4a4a"></div>
<div class="a" style="left:120.0px;top:125.9px;width:0.8px;height:1.9px;background:#3a3a3a"></div>
<span class="a t" style="left:115.25px;top:116.64px;font-size:7.7px;line-height:7.7px;letter-spacing:0.798px;color:#3c3c3c;font-weight:bold;">0.0</span>
<div class="a" style="left:142.8px;top:127.3px;width:0.8px;height:1.2px;background:#4a4a4a"></div>
<div class="a" style="left:165.6px;top:125.9px;width:0.8px;height:1.9px;background:#3a3a3a"></div>
<span class="a t" style="left:160.82px;top:116.64px;font-size:7.7px;line-height:7.7px;letter-spacing:0.798px;color:#3c3c3c;font-weight:bold;">1.0</span>
<div class="a" style="left:188.4px;top:127.3px;width:0.8px;height:1.2px;background:#4a4a4a"></div>
<div class="a" style="left:211.1px;top:125.9px;width:0.8px;height:1.9px;background:#3a3a3a"></div>
<span class="a t" style="left:206.39px;top:116.64px;font-size:7.7px;line-height:7.7px;letter-spacing:0.798px;color:#3c3c3c;font-weight:bold;">2.0</span>
<div class="a" style="left:233.9px;top:127.3px;width:0.8px;height:1.2px;background:#4a4a4a"></div>
<div class="a" style="left:256.7px;top:125.9px;width:0.8px;height:1.9px;background:#3a3a3a"></div>
<span class="a t" style="left:251.96px;top:116.64px;font-size:7.7px;line-height:7.7px;letter-spacing:0.798px;color:#3c3c3c;font-weight:bold;">3.0</span>
<div class="a" style="left:279.5px;top:127.3px;width:0.8px;height:1.2px;background:#4a4a4a"></div>
<div class="a" style="left:302.3px;top:125.9px;width:0.8px;height:1.9px;background:#3a3a3a"></div>
<span class="a t" style="left:297.53px;top:116.64px;font-size:7.7px;line-height:7.7px;letter-spacing:0.798px;color:#3c3c3c;font-weight:bold;">4.0</span>
<div class="a" style="left:325.1px;top:127.3px;width:0.8px;height:1.2px;background:#4a4a4a"></div>
<div class="a" style="left:347.9px;top:125.9px;width:0.8px;height:1.9px;background:#3a3a3a"></div>
<span class="a t" style="left:343.11px;top:116.64px;font-size:7.7px;line-height:7.7px;letter-spacing:0.798px;color:#3c3c3c;font-weight:bold;">5.0</span>
<div class="a" style="left:370.6px;top:127.3px;width:0.8px;height:1.2px;background:#4a4a4a"></div>
<div class="a" style="left:393.4px;top:125.9px;width:0.8px;height:1.9px;background:#3a3a3a"></div>
<span class="a t" style="left:388.68px;top:116.64px;font-size:7.7px;line-height:7.7px;letter-spacing:0.798px;color:#3c3c3c;font-weight:bold;">6.0</span>
<div class="a" style="left:416.2px;top:127.3px;width:0.8px;height:1.2px;background:#4a4a4a"></div>
<div class="a" style="left:439.0px;top:125.9px;width:0.8px;height:1.9px;background:#3a3a3a"></div>
<span class="a t" style="left:434.25px;top:116.64px;font-size:7.7px;line-height:7.7px;letter-spacing:0.798px;color:#3c3c3c;font-weight:bold;">7.0</span>
<div class="a" style="left:461.8px;top:127.3px;width:0.8px;height:1.2px;background:#4a4a4a"></div>
<div class="a" style="left:484.6px;top:125.9px;width:0.8px;height:1.9px;background:#3a3a3a"></div>
<span class="a t" style="left:479.82px;top:116.64px;font-size:7.7px;line-height:7.7px;letter-spacing:0.798px;color:#3c3c3c;font-weight:bold;">8.0</span>
<div class="a" style="left:507.4px;top:127.3px;width:0.8px;height:1.2px;background:#4a4a4a"></div>
<div class="a" style="left:530.1px;top:125.9px;width:0.8px;height:1.9px;background:#3a3a3a"></div>
<span class="a t" style="left:525.39px;top:116.64px;font-size:7.7px;line-height:7.7px;letter-spacing:0.798px;color:#3c3c3c;font-weight:bold;">9.0</span>
<div class="a" style="left:552.9px;top:127.3px;width:0.8px;height:1.2px;background:#4a4a4a"></div>
<div class="a" style="left:575.7px;top:125.9px;width:0.8px;height:1.9px;background:#3a3a3a"></div>
<span class="a t" style="left:569.11px;top:116.64px;font-size:7.7px;line-height:7.7px;letter-spacing:0.338px;color:#3c3c3c;font-weight:bold;">10.0</span>
<div class="a" style="left:598.5px;top:127.3px;width:0.8px;height:1.2px;background:#4a4a4a"></div>
<div class="a" style="left:621.3px;top:125.9px;width:0.8px;height:1.9px;background:#3a3a3a"></div>
<span class="a t" style="left:614.68px;top:116.64px;font-size:7.7px;line-height:7.7px;letter-spacing:0.479px;color:#3c3c3c;font-weight:bold;">11.0</span>
<div class="a" style="left:644.1px;top:127.3px;width:0.8px;height:1.2px;background:#4a4a4a"></div>
<div class="a" style="left:666.9px;top:125.9px;width:0.8px;height:1.9px;background:#3a3a3a"></div>
<span class="a t" style="left:660.25px;top:116.64px;font-size:7.7px;line-height:7.7px;letter-spacing:0.338px;color:#3c3c3c;font-weight:bold;">12.0</span>
<div class="a" style="left:689.6px;top:127.3px;width:0.8px;height:1.2px;background:#4a4a4a"></div>
<div class="a" style="left:712.4px;top:125.9px;width:0.8px;height:1.9px;background:#3a3a3a"></div>
<span class="a t" style="left:705.82px;top:116.64px;font-size:7.7px;line-height:7.7px;letter-spacing:0.338px;color:#3c3c3c;font-weight:bold;">13.0</span>
<div class="a" style="left:735.2px;top:127.3px;width:0.8px;height:1.2px;background:#4a4a4a"></div>
<div class="a" style="left:758.0px;top:125.9px;width:0.8px;height:1.9px;background:#3a3a3a"></div>
<span class="a t" style="left:751.39px;top:116.64px;font-size:7.7px;line-height:7.7px;letter-spacing:0.338px;color:#3c3c3c;font-weight:bold;">14.0</span>
<div class="a" style="left:780.8px;top:127.3px;width:0.8px;height:1.2px;background:#4a4a4a"></div>
<div class="a" style="left:39px;top:129px;width:761px;height:1px;background:#8e8e8e"></div>
<div class="a" style="left:39px;top:130px;width:761px;height:6px;background:#dedede"></div>
<div class="a" style="left:39px;top:136px;width:761px;height:1.2px;background:#23233a"></div>
<div class="a" id="tracks"></div>
<div class="a" style="left:39px;top:394.8px;width:761px;height:1.2px;background:#4e5178"></div>
<div class="a" style="left:41.6px;top:139.6px;width:756.2px;height:85px;background:#111"></div>
<div class="a" style="left:42px;top:140px;width:78px;height:83.7px;background:#d6e0f9"></div>
<div class="a" style="left:42px;top:140px;width:57px;height:0.8px;background:#fff"></div>
<div class="a" style="left:42px;top:140px;width:0.8px;height:83.6px;background:#fff"></div>
<svg class="a" style="left:43px;top:141px" width="9" height="9" viewBox="0 0 9 9"><path d="M2.7 2.7 L6.9 6.9 M6.9 2.7 L2.7 6.9" stroke="#3a3a3a" stroke-width="1"/></svg>
<div class="a" style="left:52px;top:140.6px;width:1px;height:9.5px;background:#8a8fa8"></div>
<div class="a" style="left:53px;top:140.8px;width:45.4px;height:9.2px;background:#cdd7f3"></div>
<span class="a t" style="left:54.60px;top:142.03px;font-size:6.9px;line-height:6.9px;letter-spacing:-0.201px;color:#4c4c7c;font-weight:normal;">Inverter Gru</span>
<svg class="a" style="left:90.5px;top:143.2px" width="6" height="4" viewBox="0 0 6 4"><path d="M0.4 0.6 H5.6 L3 3.6Z" fill="#333"/></svg>
<div class="a" style="left:42px;top:150.2px;width:56.6px;height:1px;background:#9a9fb6"></div>
<div class="a" style="left:42.6px;top:151.2px;width:27px;height:8.8px;background:#cbd5f0"></div>
<div class="a" style="left:70.8px;top:151.2px;width:27.6px;height:8.8px;background:#cbd5f0"></div>
<div class="a" style="left:69.8px;top:151px;width:1px;height:9.2px;background:#f4f6fd"></div>
<span class="a t" style="left:49.30px;top:152.38px;font-size:7px;line-height:7px;letter-spacing:-0.621px;color:#5a5a7c;font-weight:normal;">Mute</span>
<span class="a t" style="left:78.00px;top:152.38px;font-size:7px;line-height:7px;letter-spacing:-0.670px;color:#5a5a7c;font-weight:normal;">Solo</span>
<div class="a" style="left:42px;top:160.3px;width:56.6px;height:1px;background:#8a8fa0"></div>
<div class="a" style="left:48.9px;top:172.7px;width:44.00000000000001px;height:1px;background:#8a8a8a"></div><div class="a" style="left:48.9px;top:171.29999999999998px;width:0.8px;height:1.4px;background:#a6a6a6"></div><div class="a" style="left:53.2px;top:171.29999999999998px;width:0.8px;height:1.4px;background:#a6a6a6"></div><div class="a" style="left:57.5px;top:171.29999999999998px;width:0.8px;height:1.4px;background:#a6a6a6"></div><div class="a" style="left:61.8px;top:171.29999999999998px;width:0.8px;height:1.4px;background:#a6a6a6"></div><div class="a" style="left:66.1px;top:171.29999999999998px;width:0.8px;height:1.4px;background:#a6a6a6"></div><div class="a" style="left:70.4px;top:171.29999999999998px;width:0.8px;height:1.4px;background:#a6a6a6"></div><div class="a" style="left:74.7px;top:171.29999999999998px;width:0.8px;height:1.4px;background:#a6a6a6"></div><div class="a" style="left:79.0px;top:171.29999999999998px;width:0.8px;height:1.4px;background:#a6a6a6"></div><div class="a" style="left:83.3px;top:171.29999999999998px;width:0.8px;height:1.4px;background:#a6a6a6"></div><div class="a" style="left:87.6px;top:171.29999999999998px;width:0.8px;height:1.4px;background:#a6a6a6"></div><div class="a" style="left:91.9px;top:171.29999999999998px;width:0.8px;height:1.4px;background:#a6a6a6"></div><div class="a" style="left:49.199999999999996px;top:166.4px;width:2.6px;height:0.8px;background:#7c7c7c"></div><div class="a" style="left:88.30000000000001px;top:166.4px;width:3px;height:0.8px;background:#7c7c7c"></div><div class="a" style="left:89.4px;top:165.20000000000002px;width:0.8px;height:3px;background:#7c7c7c"></div><div class="a" style="left:67.3px;top:169.39999999999998px;width:6px;height:6px;border-radius:50%;background:radial-gradient(circle,#9b9bd8 0,#9b9bd8 22%,#4747ec 45%,#4747ec 100%)"></div>
<div class="a" style="left:48.9px;top:190.7px;width:44.00000000000001px;height:1px;background:#8a8a8a"></div><div class="a" style="left:48.9px;top:189.29999999999998px;width:0.8px;height:1.4px;background:#a6a6a6"></div><div class="a" style="left:53.2px;top:189.29999999999998px;width:0.8px;height:1.4px;background:#a6a6a6"></div><div class="a" style="left:57.5px;top:189.29999999999998px;width:0.8px;height:1.4px;background:#a6a6a6"></div><div class="a" style="left:61.8px;top:189.29999999999998px;width:0.8px;height:1.4px;background:#a6a6a6"></div><div class="a" style="left:66.1px;top:189.29999999999998px;width:0.8px;height:1.4px;background:#a6a6a6"></div><div class="a" style="left:70.4px;top:189.29999999999998px;width:0.8px;height:1.4px;background:#a6a6a6"></div><div class="a" style="left:74.7px;top:189.29999999999998px;width:0.8px;height:1.4px;background:#a6a6a6"></div><div class="a" style="left:79.0px;top:189.29999999999998px;width:0.8px;height:1.4px;background:#a6a6a6"></div><div class="a" style="left:83.3px;top:189.29999999999998px;width:0.8px;height:1.4px;background:#a6a6a6"></div><div class="a" style="left:87.6px;top:189.29999999999998px;width:0.8px;height:1.4px;background:#a6a6a6"></div><div class="a" style="left:91.9px;top:189.29999999999998px;width:0.8px;height:1.4px;background:#a6a6a6"></div><div class="a" style="left:67.3px;top:187.39999999999998px;width:6px;height:6px;border-radius:50%;background:radial-gradient(circle,#9b9bd8 0,#9b9bd8 22%,#4747ec 45%,#4747ec 100%)"></div>
<span class="a t" style="left:48.90px;top:180.86px;font-size:5.6px;line-height:5.6px;letter-spacing:-0.514px;color:#4a3a6a;font-weight:normal;">L</span>
<span class="a t" style="left:88.00px;top:180.86px;font-size:5.6px;line-height:5.6px;letter-spacing:-0.844px;color:#4a3a6a;font-weight:normal;">R</span>
<span class="a t" style="left:43.90px;top:198.27px;font-size:6.4px;line-height:6.4px;letter-spacing:-0.174px;color:#54546c;font-weight:normal;">Mono, 44100Hz</span>
<span class="a t" style="left:43.90px;top:205.07px;font-size:6.4px;line-height:6.4px;letter-spacing:0.074px;color:#54546c;font-weight:normal;">32-bit float</span>
<div class="a" style="left:42px;top:213.2px;width:44.6px;height:10.2px;background:#cad4ef;border-top:1px solid #fff;border-bottom:1px solid #9298b0;border-right:1px solid #aab0c8"></div>
<svg class="a" style="left:61px;top:216.6px" width="7" height="5" viewBox="0 0 7 5"><path d="M0.4 4.4 H6.6 L3.5 0.6Z" fill="#333"/></svg>
<div class="a" style="left:98.4px;top:140px;width:1px;height:83.6px;background:#8a8a90"></div>
<span class="a t" style="left:103.80px;top:140.99px;font-size:7.4px;line-height:7.4px;letter-spacing:0.856px;color:#3c3c3c;font-weight:bold;">1.0</span>
<span class="a t" style="left:105.00px;top:158.08px;font-size:7.2px;line-height:7.2px;letter-spacing:0.295px;color:#4c4c5c;font-weight:normal;">0.5</span>
<span class="a t" style="left:103.80px;top:177.99px;font-size:7.4px;line-height:7.4px;letter-spacing:0.856px;color:#3c3c3c;font-weight:bold;">0.0</span>
<span class="a t" style="left:102.00px;top:199.48px;font-size:7.2px;line-height:7.2px;letter-spacing:0.398px;color:#4c4c5c;font-weight:normal;">-0.5</span>
<span class="a t" style="left:101.00px;top:215.79px;font-size:7.4px;line-height:7.4px;letter-spacing:0.683px;color:#3c3c3c;font-weight:bold;">-1.0</span>
<div class="a" style="left:117.6px;top:161.3px;width:1px;height:1px;background:#555"></div>
<div class="a" style="left:117.6px;top:202.6px;width:1px;height:1px;background:#aaa"></div>
<div class="a" style="left:117.4px;top:181.2px;width:2px;height:1px;background:#8888cc"></div>
<div class="a" style="left:120px;top:140px;width:676.6px;height:83.6px;background:#bfbfbf"></div>
<div class="a" style="left:280.8px;top:140px;width:407.59999999999997px;height:83.6px;background:#e9f0fd"></div>
<div class="a" style="left:790.8px;top:140px;width:5.800000000000068px;height:83.6px;background:#dcdcdc"></div>
<svg class="a" style="left:0;top:0" width="800" height="450" viewBox="0 0 800 450"><path d="M120 181.5H790.8" stroke="#7070c8" stroke-width="0.75"/><path d="M280.5 177.3V186.7M281.5 177.3V186.6M282.5 177.6V185.5M283.5 177.4V186.0M284.5 176.6V185.4M285.5 177.5V185.7M286.5 177.0V187.0M287.5 177.4V186.1M288.5 177.2V185.7M289.5 177.1V185.9M290.5 176.6V185.5M291.5 177.1V185.4M292.5 176.8V185.7M293.5 177.2V186.3M294.5 177.6V186.1M295.5 177.3V187.1M296.5 176.5V185.5M297.5 177.4V187.1M298.5 177.1V186.3M299.5 177.2V185.8M300.5 177.5V185.7M301.5 177.4V185.4M302.5 176.7V186.1M303.5 177.6V186.4M304.5 177.2V185.8M305.5 177.6V185.7M306.5 177.6V185.6M307.5 176.8V186.1M308.5 177.3V185.6M309.5 177.1V185.5M310.5 175.6V185.6M311.5 176.5V186.0M312.5 176.8V186.2M313.5 176.9V186.0M314.5 176.8V186.5M315.5 176.9V185.7M316.5 177.6V185.8M317.5 177.2V186.4M318.5 177.4V185.7M319.5 176.7V186.3M320.5 177.6V186.2M321.5 177.2V185.7M322.5 176.7V185.9M323.5 177.5V185.6M324.5 177.5V186.4M325.5 176.0V185.6M326.5 177.1V186.5M327.5 177.4V185.8M328.5 177.4V185.9M329.5 177.2V186.1M330.5 177.1V187.4M331.5 177.5V185.5M332.5 176.9V186.1M333.5 176.8V185.6M334.5 176.9V186.1M335.5 177.2V186.2M336.5 177.2V186.1M337.5 176.7V186.5M338.5 176.8V185.7M339.5 177.4V185.6M340.5 177.5V186.3M341.5 176.6V185.8M342.5 176.6V186.4M343.5 177.3V185.8M344.5 175.9V186.0M345.5 177.1V185.6M346.5 176.5V185.8M347.5 177.5V186.0M348.5 177.4V186.5M349.5 177.5V187.7M350.5 176.9V186.4M351.5 176.7V186.1M352.5 177.3V185.7M353.5 177.4V185.6M354.5 176.8V185.9M355.5 176.6V185.9M356.5 177.4V186.1M357.5 177.1V186.1M358.5 176.8V186.7M359.5 176.9V187.4M360.5 177.5V186.4M361.5 176.7V186.6M362.5 177.2V186.1M363.5 176.5V186.7M364.5 176.1V186.0M365.5 177.0V187.2M366.5 176.4V187.4M367.5 177.3V186.3M368.5 176.8V186.6M369.5 177.4V187.9M370.5 176.6V186.3M371.5 177.0V186.2M372.5 176.9V186.6M373.5 177.5V185.8M374.5 176.9V186.4M375.5 177.5V186.6M376.5 176.8V185.8M377.5 177.2V186.5M378.5 177.0V186.1M379.5 175.6V186.4M380.5 176.6V187.5M381.5 177.1V186.6M382.5 176.7V186.5M383.5 177.0V189.0M384.5 176.2V187.4M385.5 176.4V187.5M386.5 176.5V187.6M387.5 176.4V187.0M388.5 175.9V187.1M389.5 176.2V188.1M390.5 176.3V188.0M391.5 176.3V187.7M392.5 175.6V188.0M393.5 175.6V187.9M394.5 176.1V188.4M395.5 175.7V188.1M396.5 175.0V189.3M397.5 175.7V188.9M398.5 175.3V189.0M399.5 175.4V190.1M400.5 175.7V190.4M401.5 175.0V191.6M402.5 174.2V192.6M403.5 173.2V193.2M404.5 175.4V192.6M405.5 175.3V193.6M406.5 172.4V192.5M407.5 171.4V194.9M408.5 171.6V189.3M409.5 175.7V195.8M410.5 169.5V187.6M411.5 168.7V198.3M412.5 166.8V194.2M413.5 166.5V186.0M414.5 164.7V201.1M415.5 163.9V189.7M416.5 176.3V207.2M417.5 162.7V206.3M418.5 163.9V207.5M419.5 159.7V208.8M420.5 175.3V210.8M421.5 175.0V214.3M422.5 156.4V188.3M423.5 154.3V216.1M424.5 155.7V192.7M425.5 173.7V214.2M426.5 171.7V189.7M427.5 153.3V191.0M428.5 148.9V190.3M429.5 168.6V194.2M430.5 149.9V190.3M431.5 172.9V218.9M432.5 148.1V199.2M433.5 153.4V214.4M434.5 152.5V213.5M435.5 171.8V221.9M436.5 160.8V189.4M437.5 156.0V193.0M438.5 152.9V206.8M439.5 170.1V216.7M440.5 171.1V214.9M441.5 155.2V212.0M442.5 174.5V216.5M443.5 157.4V204.4M444.5 159.2V214.2M445.5 160.3V214.0M446.5 159.8V190.9M447.5 159.3V206.2M448.5 158.4V210.1M449.5 175.2V203.0M450.5 171.8V208.5M451.5 161.8V188.9M452.5 158.9V200.3M453.5 164.4V187.4M454.5 160.8V207.2M455.5 175.8V204.1M456.5 162.6V192.8M457.5 160.1V208.7M458.5 175.8V187.2M459.5 173.9V204.9M460.5 167.2V204.6M461.5 175.9V201.6M462.5 176.0V200.0M463.5 163.0V199.0M464.5 167.3V205.0M465.5 162.1V187.7M466.5 169.1V203.8M467.5 167.1V204.4M468.5 174.6V196.0M469.5 161.7V204.8M470.5 174.4V205.0M471.5 173.8V204.1M472.5 163.8V186.7M473.5 162.4V202.6M474.5 164.2V196.7M475.5 164.5V188.6M476.5 162.7V202.1M477.5 162.5V197.7M478.5 162.3V196.5M479.5 162.6V196.2M480.5 169.7V186.5M481.5 164.2V187.6M482.5 166.3V199.5M483.5 165.1V186.5M484.5 176.5V199.7M485.5 166.4V196.3M486.5 169.5V201.1M487.5 167.3V197.3M488.5 167.1V199.7M489.5 166.4V197.2M490.5 166.0V198.9M491.5 168.1V186.4M492.5 176.6V199.0M493.5 176.0V198.0M494.5 166.4V187.5M495.5 176.4V195.8M496.5 168.5V197.0M497.5 176.6V187.4M498.5 171.0V186.4M499.5 175.5V199.1M500.5 168.5V188.6M501.5 166.6V197.1M502.5 175.4V196.1M503.5 176.7V195.6M504.5 169.8V197.4M505.5 167.7V193.8M506.5 168.9V188.9M507.5 176.8V196.8M508.5 171.1V192.3M509.5 169.7V195.2M510.5 168.7V187.2M511.5 168.8V186.6M512.5 176.8V186.2M513.5 176.8V193.1M514.5 169.2V196.8M515.5 172.4V192.6M516.5 171.5V195.3M517.5 170.1V196.9M518.5 169.3V194.8M519.5 169.9V188.2M520.5 175.7V195.5M521.5 170.2V186.7M522.5 172.1V196.0M523.5 176.9V197.4M524.5 170.2V194.4M525.5 175.5V193.3M526.5 169.9V188.7M527.5 169.8V190.0M528.5 176.3V195.7M529.5 175.5V195.8M530.5 174.5V195.6M531.5 176.6V193.4M532.5 170.7V194.2M533.5 172.3V188.1M534.5 170.7V194.4M535.5 171.4V188.3M536.5 175.7V194.9M537.5 174.9V192.6M538.5 170.9V189.6M539.5 171.1V195.0M540.5 171.8V194.5M541.5 172.9V194.0M542.5 171.5V190.2M543.5 172.1V189.0M544.5 170.4V194.5M545.5 174.9V189.8M546.5 171.3V193.8M547.5 172.3V194.1M548.5 173.4V193.8M549.5 172.6V189.3M550.5 172.3V194.8M551.5 175.8V193.4M552.5 171.2V194.2M553.5 172.0V193.4M554.5 172.9V193.5M555.5 171.4V191.6M556.5 175.8V192.8M557.5 172.4V189.9M558.5 175.1V188.2M559.5 171.3V194.0M560.5 175.1V191.4M561.5 171.4V187.4M562.5 175.8V188.5M563.5 175.0V191.9M564.5 172.6V194.2M565.5 176.3V193.8M566.5 171.0V188.8M567.5 175.1V188.3M568.5 171.8V187.9M569.5 175.4V192.7M570.5 171.1V192.9M571.5 174.9V188.1M572.5 174.4V193.5M573.5 171.5V188.4M574.5 175.8V192.7M575.5 175.8V189.3M576.5 175.0V188.9M577.5 176.1V189.6M578.5 173.0V193.0M579.5 174.5V193.6M580.5 173.3V192.9M581.5 173.8V191.8M582.5 171.8V188.2M583.5 172.5V189.7M584.5 175.1V190.1M585.5 173.0V192.6M586.5 172.5V188.3M587.5 175.2V192.2M588.5 174.0V189.4M589.5 172.8V190.2M590.5 174.4V193.3M591.5 172.6V188.4M592.5 173.5V191.8M593.5 172.2V189.3M594.5 172.0V193.5M595.5 172.8V191.5M596.5 175.4V193.0M597.5 172.3V192.3M598.5 171.9V192.7M599.5 172.0V193.6M600.5 174.7V194.0M601.5 172.1V194.6M602.5 174.6V189.7M603.5 173.5V194.3M604.5 174.4V193.5M605.5 174.8V192.7M606.5 172.8V193.2M607.5 174.9V193.4M608.5 172.1V191.3M609.5 175.1V194.2M610.5 174.5V193.9M611.5 173.0V189.7M612.5 174.7V193.3M613.5 172.5V194.6M614.5 171.7V192.2M615.5 175.1V194.5M616.5 172.5V197.5M617.5 174.5V189.7M618.5 172.6V190.2M619.5 174.8V192.1M620.5 173.7V190.4M621.5 173.1V193.4M622.5 173.8V191.8M623.5 171.8V193.6M624.5 173.6V194.6M625.5 172.1V189.9M626.5 174.3V191.8M627.5 174.9V194.9M628.5 171.6V193.6M629.5 169.5V194.1M630.5 172.7V191.0M631.5 174.3V192.3M632.5 174.0V192.9M633.5 173.3V191.0M634.5 174.7V190.3M635.5 174.3V190.1M636.5 173.0V192.9M637.5 173.1V192.7M638.5 174.3V192.2M639.5 173.8V194.0M640.5 174.1V194.6M641.5 174.9V197.8M642.5 173.5V193.4M643.5 172.4V190.4M644.5 172.8V193.9M645.5 172.3V193.5M646.5 171.7V192.9M647.5 172.9V192.2M648.5 172.1V194.1M649.5 173.4V193.3M650.5 173.6V191.3M651.5 173.4V190.6M652.5 172.9V190.1M653.5 171.9V194.5M654.5 175.0V189.9M655.5 172.1V192.4M656.5 172.5V191.6M657.5 171.5V196.5M658.5 173.5V192.5M659.5 173.2V191.9M660.5 173.0V193.8M661.5 171.9V192.3M662.5 171.9V194.7M663.5 173.9V192.3M664.5 172.6V192.8M665.5 174.8V191.8M666.5 174.9V191.3M667.5 174.2V192.3M668.5 172.9V194.8M669.5 174.3V193.7M670.5 172.9V194.0M671.5 174.9V193.7M672.5 174.2V191.2M673.5 173.5V195.3M674.5 172.6V194.8M675.5 174.7V194.6M676.5 171.7V191.4M677.5 171.1V191.1M678.5 173.6V194.4M679.5 174.1V191.7M680.5 172.6V190.5M681.5 174.5V190.6M682.5 174.0V194.4M683.5 173.4V193.5M684.5 171.4V190.6M685.5 174.1V191.8M686.5 173.9V194.9M687.5 174.2V193.7M688.5 173.2V191.3M662.4 164.2V189.5M679.6 167.5V190.5M678.6 170.0V190.5M680.6 170.0V190.5M677.6 171.5V190.5M681.6 171.5V190.5M618 181.5V199.0M681 181.5V200.3M682 181.5V196.5" stroke="#3d3dcf" stroke-width="1.1" fill="none"/><path d="M280.5 179.4V183.6M281.5 179.5V183.5M282.5 179.6V183.4M283.5 179.5V183.5M284.5 179.6V183.4M285.5 179.4V183.6M286.5 179.7V183.3M287.5 179.4V183.6M288.5 179.6V183.4M289.5 179.5V183.5M290.5 179.6V183.4M291.5 179.4V183.6M292.5 179.4V183.6M293.5 179.3V183.7M294.5 179.3V183.7M295.5 179.4V183.6M296.5 179.6V183.4M297.5 179.4V183.6M298.5 179.5V183.5M299.5 179.6V183.4M300.5 179.4V183.6M301.5 179.4V183.6M302.5 179.3V183.7M303.5 179.2V183.8M304.5 179.6V183.4M305.5 179.6V183.4M306.5 179.7V183.3M307.5 179.5V183.5M308.5 179.4V183.6M309.5 179.5V183.5M310.5 179.4V183.6M311.5 179.1V183.9M312.5 179.6V183.4M313.5 179.5V183.5M314.5 179.2V183.8M315.5 179.6V183.4M316.5 179.1V183.9M317.5 179.5V183.5M318.5 179.3V183.7M319.5 179.2V183.8M320.5 179.2V183.8M321.5 179.2V183.8M322.5 179.2V183.8M323.5 179.2V183.8M324.5 179.4V183.6M325.5 179.3V183.7M326.5 179.2V183.8M327.5 179.3V183.7M328.5 179.4V183.6M329.5 179.1V183.9M330.5 179.4V183.6M331.5 179.4V183.6M332.5 179.3V183.7M333.5 179.5V183.5M334.5 179.1V183.9M335.5 179.2V183.8M336.5 179.2V183.8M337.5 179.1V183.9M338.5 179.6V183.4M339.5 179.1V183.9M340.5 179.1V183.9M341.5 179.3V183.7M342.5 179.3V183.7M343.5 179.6V183.4M344.5 179.3V183.7M345.5 179.1V183.9M346.5 179.5V183.5M347.5 179.5V183.5M348.5 179.5V183.5M349.5 179.1V183.9M350.5 179.6V183.4M351.5 179.1V183.9M352.5 179.5V183.5M353.5 179.4V183.6M354.5 179.4V183.6M355.5 179.3V183.7M356.5 179.1V183.9M357.5 179.3V183.7M358.5 179.2V183.8M359.5 179.5V183.5M360.5 179.5V183.5M361.5 179.4V183.6M362.5 179.4V183.6M363.5 179.0V184.0M364.5 179.3V183.7M365.5 179.4V183.6M366.5 179.4V183.6M367.5 179.2V183.8M368.5 179.0V184.0M369.5 179.1V183.9M370.5 179.5V183.5M371.5 179.1V183.9M372.5 179.4V183.6M373.5 179.1V183.9M374.5 179.3V183.7M375.5 179.2V183.8M376.5 179.5V183.5M377.5 179.0V184.0M378.5 179.1V183.9M379.5 179.4V183.6M380.5 179.5V183.5M381.5 179.3V183.7M382.5 178.9V184.1M383.5 179.2V183.8M384.5 179.3V183.7M385.5 179.3V183.7M386.5 179.0V184.0M387.5 179.1V183.9M388.5 178.7V184.3M389.5 178.9V184.1M390.5 179.0V184.0M391.5 178.6V184.4M392.5 178.7V184.3M393.5 179.1V183.9M394.5 178.4V184.6M395.5 179.0V184.0M396.5 178.7V184.3M397.5 178.8V184.2M398.5 178.7V184.3M399.5 178.5V184.5M400.5 178.2V184.8M401.5 178.4V184.6M402.5 177.9V185.1M403.5 178.0V185.0M404.5 178.4V184.6M405.5 177.9V185.1M406.5 177.8V185.2M407.5 177.9V185.1M408.5 177.7V185.3M409.5 178.1V184.9M410.5 177.5V185.5M411.5 176.9V186.1M412.5 177.3V185.7M413.5 176.8V186.2M414.5 177.0V186.0M415.5 175.5V187.5M416.5 175.5V187.5M417.5 175.9V187.1M418.5 174.6V188.4M419.5 174.5V188.5M420.5 175.0V188.0M421.5 175.3V187.7M422.5 175.0V188.0M423.5 173.0V190.0M424.5 173.9V189.1M425.5 172.5V190.5M426.5 173.3V189.7M427.5 172.9V190.1M428.5 171.2V191.8M429.5 172.3V190.7M430.5 172.7V190.3M431.5 172.0V191.0M432.5 172.9V190.1M433.5 172.6V190.4M434.5 172.1V190.9M435.5 173.3V189.7M436.5 173.5V189.5M437.5 173.5V189.5M438.5 172.6V190.4M439.5 172.8V190.2M440.5 174.4V188.6M441.5 174.0V189.0M442.5 173.0V190.0M443.5 174.2V188.8M444.5 173.8V189.2M445.5 174.8V188.2M446.5 175.1V187.9M447.5 175.2V187.8M448.5 174.9V188.1M449.5 174.8V188.2M450.5 174.4V188.6M451.5 174.3V188.7M452.5 175.8V187.2M453.5 174.9V188.1M454.5 175.2V187.8M455.5 174.5V188.5M456.5 175.3V187.7M457.5 175.2V187.8M458.5 175.5V187.5M459.5 175.6V187.4M460.5 175.1V187.9M461.5 176.2V186.8M462.5 175.3V187.7M463.5 175.3V187.7M464.5 175.6V187.4M465.5 176.1V186.9M466.5 176.3V186.7M467.5 176.3V186.7M468.5 175.7V187.3M469.5 175.0V188.0M470.5 175.8V187.2M471.5 175.2V187.8M472.5 175.3V187.7M473.5 175.3V187.7M474.5 176.6V186.4M475.5 175.4V187.6M476.5 175.8V187.2M477.5 175.5V187.5M478.5 175.6V187.4M479.5 175.7V187.3M480.5 175.6V187.4M481.5 175.9V187.1M482.5 175.9V187.1M483.5 176.5V186.5M484.5 176.7V186.3M485.5 176.5V186.5M486.5 176.5V186.5M487.5 175.8V187.2M488.5 176.1V186.9M489.5 175.9V187.1M490.5 176.3V186.7M491.5 176.1V186.9M492.5 176.2V186.8M493.5 176.5V186.5M494.5 176.9V186.1M495.5 176.3V186.7M496.5 176.5V186.5M497.5 176.6V186.4M498.5 176.6V186.4M499.5 176.9V186.1M500.5 176.0V187.0M501.5 176.1V186.9M502.5 176.4V186.6M503.5 175.8V187.2M504.5 177.0V186.0M505.5 176.2V186.8M506.5 175.8V187.2M507.5 176.0V187.0M508.5 176.1V186.9M509.5 176.1V186.9M510.5 177.0V186.0M511.5 176.8V186.2M512.5 176.1V186.9M513.5 176.5V186.5M514.5 176.2V186.8M515.5 176.1V186.9M516.5 176.0V187.0M517.5 176.0V187.0M518.5 176.7V186.3M519.5 176.6V186.4M520.5 176.9V186.1M521.5 176.8V186.2M522.5 177.1V185.9M523.5 176.6V186.4M524.5 176.7V186.3M525.5 176.4V186.6M526.5 176.7V186.3M527.5 176.4V186.6M528.5 176.2V186.8M529.5 176.7V186.3M530.5 176.6V186.4M531.5 176.6V186.4M532.5 176.2V186.8M533.5 176.3V186.7M534.5 177.2V185.8M535.5 176.3V186.7M536.5 177.1V185.9M537.5 176.1V186.9M538.5 176.6V186.4M539.5 177.0V186.0M540.5 176.9V186.1M541.5 176.2V186.8M542.5 176.5V186.5M543.5 177.1V185.9M544.5 177.1V185.9M545.5 176.3V186.7M546.5 176.6V186.4M547.5 177.2V185.8M548.5 176.8V186.2M549.5 177.3V185.7M550.5 176.9V186.1M551.5 176.6V186.4M552.5 177.1V185.9M553.5 176.9V186.1M554.5 177.0V186.0M555.5 176.5V186.5M556.5 176.3V186.7M557.5 176.6V186.4M558.5 176.5V186.5M559.5 177.0V186.0M560.5 177.0V186.0M561.5 177.3V185.7M562.5 176.7V186.3M563.5 177.2V185.8M564.5 177.3V185.7M565.5 177.2V185.8M566.5 176.7V186.3M567.5 177.4V185.6M568.5 177.3V185.7M569.5 176.7V186.3M570.5 177.0V186.0M571.5 176.3V186.7M572.5 176.8V186.2M573.5 176.4V186.6M574.5 176.5V186.5M575.5 177.2V185.8M576.5 176.9V186.1M577.5 176.7V186.3M578.5 177.4V185.6M579.5 176.9V186.1M580.5 177.1V185.9M581.5 177.1V185.9M582.5 176.9V186.1M583.5 177.2V185.8M584.5 177.3V185.7M585.5 176.6V186.4M586.5 177.4V185.6M587.5 177.1V185.9M588.5 177.3V185.7M589.5 176.8V186.2M590.5 176.8V186.2M591.5 177.5V185.5M592.5 176.8V186.2M593.5 176.6V186.4M594.5 177.1V185.9M595.5 177.5V185.5M596.5 177.4V185.6M597.5 176.6V186.4M598.5 177.1V185.9M599.5 176.6V186.4M600.5 176.8V186.2M601.5 177.2V185.8M602.5 177.4V185.6M603.5 177.5V185.5M604.5 177.5V185.5M605.5 177.4V185.6M606.5 177.4V185.6M607.5 177.6V185.4M608.5 177.1V185.9M609.5 177.4V185.6M610.5 177.2V185.8M611.5 177.1V185.9M612.5 177.3V185.7M613.5 176.7V186.3M614.5 177.1V185.9M615.5 177.6V185.4M616.5 176.9V186.1M617.5 177.1V185.9M618.5 177.6V185.4M619.5 177.6V185.4M620.5 177.5V185.5M621.5 176.6V186.4M622.5 177.3V185.7M623.5 177.3V185.7M624.5 176.8V186.2M625.5 176.7V186.3M626.5 177.1V185.9M627.5 177.6V185.4M628.5 176.8V186.2M629.5 177.4V185.6M630.5 177.0V186.0M631.5 177.4V185.6M632.5 176.7V186.3M633.5 177.6V185.4M634.5 177.4V185.6M635.5 177.1V185.9M636.5 177.2V185.8M637.5 177.5V185.5M638.5 177.7V185.3M639.5 177.2V185.8M640.5 177.6V185.4M641.5 177.3V185.7M642.5 176.7V186.3M643.5 177.0V186.0M644.5 177.0V186.0M645.5 177.0V186.0M646.5 176.9V186.1M647.5 177.3V185.7M648.5 177.3V185.7M649.5 177.2V185.8M650.5 177.3V185.7M651.5 177.2V185.8M652.5 176.9V186.1M653.5 176.8V186.2M654.5 176.8V186.2M655.5 177.3V185.7M656.5 177.4V185.6M657.5 177.4V185.6M658.5 176.8V186.2M659.5 177.5V185.5M660.5 176.8V186.2M661.5 177.1V185.9M662.5 177.7V185.3M663.5 177.6V185.4M664.5 177.2V185.8M665.5 177.1V185.9M666.5 177.1V185.9M667.5 177.2V185.8M668.5 177.7V185.3M669.5 177.7V185.3M670.5 177.8V185.2M671.5 177.5V185.5M672.5 177.3V185.7M673.5 176.9V186.1M674.5 177.6V185.4M675.5 176.9V186.1M676.5 177.4V185.6M677.5 177.7V185.3M678.5 177.6V185.4M679.5 177.6V185.4M680.5 177.5V185.5M681.5 177.6V185.4M682.5 177.2V185.8M683.5 177.6V185.4M684.5 177.1V185.9M685.5 176.9V186.1M686.5 177.4V185.6M687.5 177.3V185.7M688.5 177.0V186.0" stroke="#6363dc" stroke-width="1.1" fill="none"/><path d="M226.5 151.3V216.8" stroke="#3d3dcf" stroke-width="1"/><path d="M226.2 176.2 Q227.6 180.6 233.6 181.5 Q227.6 182.4 226.2 186.8Z" fill="#4a4ad2"/><path d="M219.4 180.3V182.7" stroke="#5656d0" stroke-width="0.9"/><path d="M693.5 161.6V199.8" stroke="#4a4ad2" stroke-width="0.9"/><path d="M693.3 177.8 Q694.4 181 697.4 181.5 Q694.4 182 693.3 185.2Z" fill="#4a4ad2"/><path d="M761 180.8H764.2V182.4H761Z" fill="#3d3dcf"/><path d="M769.3 179.2V183.8" stroke="#3d3dcf" stroke-width="0.9"/></svg>
<div class="a" id="bot"></div>
<div class="a" style="left:39px;top:396px;width:761px;height:8px;background:#f2f1ef"></div>
<div class="a" style="left:119.6px;top:396.6px;width:672.6px;height:7px;background:#dedcd8;border-radius:3.5px"></div>
<div class="a" style="left:126.6px;top:396.8px;width:529.6px;height:6.6px;background:linear-gradient(#fdfdfc,#eceae7);border:1px solid #b9b6b0;border-radius:3.3px"></div>
<div class="a" style="left:119.6px;top:396.8px;width:7px;height:6.6px;background:linear-gradient(#fdfdfc,#eceae7);border:1px solid #c5c2bc;border-radius:3.3px 0 0 3.3px"></div>
<div class="a" style="left:784px;top:396.8px;width:8px;height:6.6px;background:linear-gradient(#fdfdfc,#eceae7);border:1px solid #c5c2bc;border-radius:0 3.3px 3.3px 0"></div>
<svg class="a" style="left:121.4px;top:398px" width="4" height="5" viewBox="0 0 4 5"><path d="M2.8 0.6 L1 2.2 L2.8 3.8Z" fill="#555"/></svg>
<svg class="a" style="left:786px;top:398px" width="4" height="5" viewBox="0 0 4 5"><path d="M1.2 0.6 L3 2.2 L1.2 3.8Z" fill="#555"/></svg>
<svg class="a" style="left:500px;top:398px" width="10" height="5" viewBox="0 0 10 5"><path d="M3.6 0.8V3.8M5 0.8V3.8M6.4 0.8V3.8" stroke="#bbb" stroke-width="0.6"/></svg>
<div class="a" style="left:39px;top:404px;width:761px;height:1px;background:#e0e0e4"></div>
<div class="grab" style="left:41px;top:407px;height:27px"></div>
<div class="a" style="left:45.6px;top:405px;width:1px;height:31px;background:#e2e4ec"></div>
<span class="a t" style="left:49.70px;top:409.85px;font-size:8.9px;line-height:8.9px;letter-spacing:0.316px;color:#38384e;font-weight:normal;">Project Rate (Hz):</span>
<div class="a" style="left:129.4px;top:409.5px;width:1px;height:24px;background:#dcdee6"></div>
<span class="a t" style="left:133.70px;top:409.85px;font-size:8.9px;line-height:8.9px;letter-spacing:-0.142px;color:#38384e;font-weight:normal;">Snap-To</span>
<div class="a" style="left:183.3px;top:409.5px;width:1px;height:24px;background:#dcdee6"></div>
<span class="a t" style="left:187.00px;top:409.85px;font-size:8.9px;line-height:8.9px;letter-spacing:0.269px;color:#38384e;font-weight:normal;">Audio Position</span>
<div class="a" style="left:277.4px;top:409.5px;width:1px;height:24px;background:#dcdee6"></div>
<div class="combo" style="left:50px;top:423.6px;width:49.2px;height:11.4px"></div>
<div class="a" style="left:51.6px;top:425.4px;width:24px;height:8.8px;background:#dfdfe1"></div>
<div class="a" style="left:84.6px;top:424px;width:1px;height:10.6px;background:#c8c6c0"></div>
<span class="a t" style="left:52.40px;top:426.19px;font-size:8.2px;line-height:8.2px;letter-spacing:-0.101px;color:#2c2c2c;font-weight:normal;">44100</span>
<svg class="a" style="left:89px;top:427.2px" width="7" height="5" viewBox="0 0 7 5"><path d="M0.8 0.8 H6 L3.4 4Z" fill="#555"/></svg>
<div class="combo" style="left:134.4px;top:423.6px;width:43.599999999999994px;height:12.399999999999977px"></div><span class="a t" style="left:137.60px;top:427.19px;font-size:7.8px;line-height:7.8px;letter-spacing:-0.230px;color:#3c3c3c;font-weight:normal;">Off</span><svg class="a" style="left:169.4px;top:424.8px" width="6" height="10" viewBox="0 0 6 10"><path d="M1.2 3.6 L3 1.8 L4.8 3.6" stroke="#555" stroke-width="0.9" fill="none"/><path d="M1.2 6.2 L3 8 L4.8 6.2Z" fill="#555" stroke="#555" stroke-width="0.5"/></svg>
<div class="combo" style="left:281.8px;top:408.3px;width:173.8px;height:12.5px"></div><span class="a t" style="left:285.20px;top:411.89px;font-size:7.9px;line-height:7.9px;letter-spacing:0.040px;color:#3c3c3c;font-weight:normal;">Start and End of Selection</span><svg class="a" style="left:447px;top:409.55px" width="6" height="10" viewBox="0 0 6 10"><path d="M1.2 3.6 L3 1.8 L4.8 3.6" stroke="#555" stroke-width="0.9" fill="none"/><path d="M1.2 6.2 L3 8 L4.8 6.2Z" fill="#555" stroke="#555" stroke-width="0.5"/></svg>
<div class="tc" style="left:187.6px;top:423.3px;width:85px;height:12px;border-radius:2px;border:0.7px solid #c9ccd4;background:#b3b7c3"></div><div class="a" style="left:189.3px;top:425px;width:5.4px;height:9.2px;background:#c6cbdc"></div><div class="a" style="left:195.0px;top:425px;width:5.4px;height:9.2px;background:#c6cbdc"></div><div class="a" style="left:208.3px;top:425px;width:5.4px;height:9.2px;background:#c6cbdc"></div><div class="a" style="left:214.2px;top:425px;width:5.4px;height:9.2px;background:#c6cbdc"></div><div class="a" style="left:229.9px;top:425px;width:5.4px;height:9.2px;background:#c6cbdc"></div><div class="a" style="left:235.7px;top:425px;width:5.4px;height:9.2px;background:#c6cbdc"></div><div class="a" style="left:243.3px;top:425px;width:5.4px;height:9.2px;background:#c6cbdc"></div><div class="a" style="left:249.3px;top:425px;width:5.4px;height:9.2px;background:#c6cbdc"></div><div class="a" style="left:255.2px;top:425px;width:5.4px;height:9.2px;background:#c6cbdc"></div><span class="a t" style="left:189.78px;top:425.59px;font-size:8.0px;line-height:8.0px;letter-spacing:0.000px;color:#1616b4;font-weight:normal;">0</span><span class="a t" style="left:195.48px;top:425.59px;font-size:8.0px;line-height:8.0px;letter-spacing:0.000px;color:#1616b4;font-weight:normal;">0</span><span class="a t" style="left:201.78px;top:425.59px;font-size:8.0px;line-height:8.0px;letter-spacing:0.000px;color:#20207c;font-weight:normal;">h</span><span class="a t" style="left:208.78px;top:425.59px;font-size:8.0px;line-height:8.0px;letter-spacing:0.000px;color:#1616b4;font-weight:normal;">0</span><span class="a t" style="left:214.68px;top:425.59px;font-size:8.0px;line-height:8.0px;letter-spacing:0.000px;color:#1616b4;font-weight:normal;">0</span><span class="a t" style="left:221.67px;top:425.59px;font-size:8.0px;line-height:8.0px;letter-spacing:0.000px;color:#20207c;font-weight:normal;">m</span><span class="a t" style="left:230.38px;top:425.59px;font-size:8.0px;line-height:8.0px;letter-spacing:0.000px;color:#1616b4;font-weight:normal;">0</span><span class="a t" style="left:236.18px;top:425.59px;font-size:8.0px;line-height:8.0px;letter-spacing:0.000px;color:#1616b4;font-weight:normal;">3</span><span class="a t" style="left:241.39px;top:425.59px;font-size:8.0px;line-height:8.0px;letter-spacing:-0.000px;color:#20207c;font-weight:normal;">.</span><span class="a t" style="left:243.78px;top:425.59px;font-size:8.0px;line-height:8.0px;letter-spacing:0.000px;color:#1616b4;font-weight:normal;">5</span><span class="a t" style="left:249.78px;top:425.59px;font-size:8.0px;line-height:8.0px;letter-spacing:0.000px;color:#1616b4;font-weight:normal;">2</span><span class="a t" style="left:255.68px;top:425.59px;font-size:8.0px;line-height:8.0px;letter-spacing:0.000px;color:#1616b4;font-weight:normal;">0</span><span class="a t" style="left:261.90px;top:425.59px;font-size:8.0px;line-height:8.0px;letter-spacing:0.000px;color:#20207c;font-weight:normal;">s</span><div class="a" style="left:266.5px;top:424.6px;width:5.2px;height:10px;background:#cfd3dd;border-radius:1px"></div><svg class="a" style="left:266.8px;top:428px" width="5" height="4" viewBox="0 0 5 4"><path d="M0.3 0.5H4.5L2.4 3.4Z" fill="#111"/></svg>
<div class="tc" style="left:282.3px;top:423.3px;width:85px;height:12px;border-radius:2px;border:0.7px solid #c9ccd4;background:#b3b7c3"></div><div class="a" style="left:284.0px;top:425px;width:5.4px;height:9.2px;background:#c6cbdc"></div><div class="a" style="left:289.7px;top:425px;width:5.4px;height:9.2px;background:#c6cbdc"></div><div class="a" style="left:303.0px;top:425px;width:5.4px;height:9.2px;background:#c6cbdc"></div><div class="a" style="left:308.9px;top:425px;width:5.4px;height:9.2px;background:#c6cbdc"></div><div class="a" style="left:324.6px;top:425px;width:5.4px;height:9.2px;background:#c6cbdc"></div><div class="a" style="left:330.4px;top:425px;width:5.4px;height:9.2px;background:#c6cbdc"></div><div class="a" style="left:338.0px;top:425px;width:5.4px;height:9.2px;background:#c6cbdc"></div><div class="a" style="left:344.0px;top:425px;width:5.4px;height:9.2px;background:#c6cbdc"></div><div class="a" style="left:349.9px;top:425px;width:5.4px;height:9.2px;background:#c6cbdc"></div><span class="a t" style="left:284.48px;top:425.59px;font-size:8.0px;line-height:8.0px;letter-spacing:0.000px;color:#1616b4;font-weight:normal;">0</span><span class="a t" style="left:290.18px;top:425.59px;font-size:8.0px;line-height:8.0px;letter-spacing:0.000px;color:#1616b4;font-weight:normal;">0</span><span class="a t" style="left:296.48px;top:425.59px;font-size:8.0px;line-height:8.0px;letter-spacing:0.000px;color:#20207c;font-weight:normal;">h</span><span class="a t" style="left:303.48px;top:425.59px;font-size:8.0px;line-height:8.0px;letter-spacing:0.000px;color:#1616b4;font-weight:normal;">0</span><span class="a t" style="left:309.38px;top:425.59px;font-size:8.0px;line-height:8.0px;letter-spacing:0.000px;color:#1616b4;font-weight:normal;">0</span><span class="a t" style="left:316.37px;top:425.59px;font-size:8.0px;line-height:8.0px;letter-spacing:0.000px;color:#20207c;font-weight:normal;">m</span><span class="a t" style="left:325.08px;top:425.59px;font-size:8.0px;line-height:8.0px;letter-spacing:0.000px;color:#1616b4;font-weight:normal;">0</span><span class="a t" style="left:330.88px;top:425.59px;font-size:8.0px;line-height:8.0px;letter-spacing:0.000px;color:#1616b4;font-weight:normal;">3</span><span class="a t" style="left:336.09px;top:425.59px;font-size:8.0px;line-height:8.0px;letter-spacing:-0.000px;color:#20207c;font-weight:normal;">.</span><span class="a t" style="left:338.48px;top:425.59px;font-size:8.0px;line-height:8.0px;letter-spacing:0.000px;color:#1616b4;font-weight:normal;">5</span><span class="a t" style="left:344.48px;top:425.59px;font-size:8.0px;line-height:8.0px;letter-spacing:0.000px;color:#1616b4;font-weight:normal;">2</span><span class="a t" style="left:350.38px;top:425.59px;font-size:8.0px;line-height:8.0px;letter-spacing:0.000px;color:#1616b4;font-weight:normal;">0</span><span class="a t" style="left:356.60px;top:425.59px;font-size:8.0px;line-height:8.0px;letter-spacing:0.000px;color:#20207c;font-weight:normal;">s</span><div class="a" style="left:361.20000000000005px;top:424.6px;width:5.2px;height:10px;background:#cfd3dd;border-radius:1px"></div><svg class="a" style="left:361.5px;top:428px" width="5" height="4" viewBox="0 0 5 4"><path d="M0.3 0.5H4.5L2.4 3.4Z" fill="#111"/></svg>
<div class="tc" style="left:371.6px;top:423.3px;width:85px;height:12px;border-radius:2px;border:0.7px solid #c9ccd4;background:#b3b7c3"></div><div class="a" style="left:373.3px;top:425px;width:5.4px;height:9.2px;background:#c6cbdc"></div><div class="a" style="left:379.0px;top:425px;width:5.4px;height:9.2px;background:#c6cbdc"></div><div class="a" style="left:392.3px;top:425px;width:5.4px;height:9.2px;background:#c6cbdc"></div><div class="a" style="left:398.2px;top:425px;width:5.4px;height:9.2px;background:#c6cbdc"></div><div class="a" style="left:413.9px;top:425px;width:5.4px;height:9.2px;background:#c6cbdc"></div><div class="a" style="left:419.7px;top:425px;width:5.4px;height:9.2px;background:#c6cbdc"></div><div class="a" style="left:427.3px;top:425px;width:5.4px;height:9.2px;background:#c6cbdc"></div><div class="a" style="left:433.3px;top:425px;width:5.4px;height:9.2px;background:#c6cbdc"></div><div class="a" style="left:439.2px;top:425px;width:5.4px;height:9.2px;background:#c6cbdc"></div><span class="a t" style="left:373.78px;top:425.59px;font-size:8.0px;line-height:8.0px;letter-spacing:0.000px;color:#1616b4;font-weight:normal;">0</span><span class="a t" style="left:379.48px;top:425.59px;font-size:8.0px;line-height:8.0px;letter-spacing:0.000px;color:#1616b4;font-weight:normal;">0</span><span class="a t" style="left:385.78px;top:425.59px;font-size:8.0px;line-height:8.0px;letter-spacing:0.000px;color:#20207c;font-weight:normal;">h</span><span class="a t" style="left:392.78px;top:425.59px;font-size:8.0px;line-height:8.0px;letter-spacing:0.000px;color:#1616b4;font-weight:normal;">0</span><span class="a t" style="left:398.68px;top:425.59px;font-size:8.0px;line-height:8.0px;letter-spacing:0.000px;color:#1616b4;font-weight:normal;">0</span><span class="a t" style="left:405.67px;top:425.59px;font-size:8.0px;line-height:8.0px;letter-spacing:0.000px;color:#20207c;font-weight:normal;">m</span><span class="a t" style="left:414.38px;top:425.59px;font-size:8.0px;line-height:8.0px;letter-spacing:0.000px;color:#1616b4;font-weight:normal;">1</span><span class="a t" style="left:420.18px;top:425.59px;font-size:8.0px;line-height:8.0px;letter-spacing:0.000px;color:#1616b4;font-weight:normal;">2</span><span class="a t" style="left:425.39px;top:425.59px;font-size:8.0px;line-height:8.0px;letter-spacing:-0.000px;color:#20207c;font-weight:normal;">.</span><span class="a t" style="left:427.78px;top:425.59px;font-size:8.0px;line-height:8.0px;letter-spacing:0.000px;color:#1616b4;font-weight:normal;">4</span><span class="a t" style="left:433.78px;top:425.59px;font-size:8.0px;line-height:8.0px;letter-spacing:0.000px;color:#1616b4;font-weight:normal;">7</span><span class="a t" style="left:439.68px;top:425.59px;font-size:8.0px;line-height:8.0px;letter-spacing:0.000px;color:#1616b4;font-weight:normal;">4</span><span class="a t" style="left:445.90px;top:425.59px;font-size:8.0px;line-height:8.0px;letter-spacing:0.000px;color:#20207c;font-weight:normal;">s</span><div class="a" style="left:450.5px;top:424.6px;width:5.2px;height:10px;background:#cfd3dd;border-radius:1px"></div><svg class="a" style="left:450.8px;top:428px" width="5" height="4" viewBox="0 0 5 4"><path d="M0.3 0.5H4.5L2.4 3.4Z" fill="#111"/></svg>
<div class="a" style="left:39px;top:436.6px;width:761px;height:1px;background:#d4d3d0"></div>
<div class="a" id="status"></div>
<span class="a t" style="left:42.50px;top:439.90px;font-size:8.8px;line-height:8.8px;letter-spacing:0.067px;color:#3a3a3a;font-weight:normal;">Stopped.</span>
<div class="a" style="left:105.6px;top:69px;width:152.4px;height:14.6px;background:#0c0c0c;border-radius:3.5px"></div>
<span class="a t" style="left:108.20px;top:72.80px;font-size:8.8px;line-height:8.8px;letter-spacing:-0.169px;color:#f0f0f0;font-weight:normal;">Play (Space) / Loop Play (Shift+Space)</span>
<svg class="a" style="left:57px;top:1.5px" width="13" height="13" viewBox="0 0 13 13"><path d="M2.4 8.8 C2.4 0.4 10.6 0.4 10.6 8.8" stroke="#1a1ac8" stroke-width="1.1" fill="none"/><circle cx="6.5" cy="8" r="3.1" fill="#f4cc20"/><path d="M3.6 7.8 H9.4 V9.4 H3.6Z" fill="#e8401c"/><rect x="1.4" y="6.8" width="1.9" height="3.8" rx="0.9" fill="#1a1ac8"/><rect x="9.7" y="6.8" width="1.9" height="3.8" rx="0.9" fill="#1a1ac8"/></svg>
<svg class="a" style="left:110.6px;top:6px" width="8" height="5" viewBox="0 0 8 5"><path d="M0.4 0.4 H6.8 L3.6 3.8Z" fill="#d4d2cc"/></svg>
<svg class="a" style="left:753px;top:2.5px" width="11" height="10" viewBox="0 0 11 10"><path d="M0.8 3.4 H2.6 L5 1.2 V8.8 L2.6 6.6 H0.8Z" fill="#dcdad4"/><path d="M6.3 3.2 Q7.5 5 6.3 6.8" stroke="#dcdad4" stroke-width="0.8" fill="none"/><path d="M7.6 1.6 Q10 5 7.6 8.4" stroke="#b8b6b0" stroke-width="0.8" fill="none"/></svg>
<svg class="a" style="left:770px;top:2.5px" width="9" height="10" viewBox="0 0 9 10"><path d="M1.4 1.6 H2.8 V0.8 H6 V1.6 H7.4 V9.2 H1.4Z" stroke="#c8c6c0" stroke-width="0.8" fill="none"/><path d="M5.2 2.6 L3 5.6 H4.6 L3.8 8.2 L6 5 H4.4Z" fill="#dcdad4"/></svg>
<svg class="a" style="left:785px;top:6px" width="7" height="4" viewBox="0 0 7 4"><path d="M0.3 0.4 H6.3 L3.3 3.4Z" fill="#dcdad4"/></svg>
<div class="a" style="left:764.3px;top:19.4px;width:9.4px;height:9.4px;border-radius:50%;background:linear-gradient(#8a8983,#6e6d67);border:0.6px solid #55544e"></div>
<div class="a" style="left:775.9px;top:19.4px;width:9.4px;height:9.4px;border-radius:50%;background:linear-gradient(#8a8983,#6e6d67);border:0.6px solid #55544e"></div>
<div class="a" style="left:787.7px;top:19.3px;width:9.6px;height:9.6px;border-radius:50%;background:linear-gradient(#f0683a,#e2501f);border:0.6px solid #8a3a1c"></div>
<svg class="a" style="left:764.3px;top:19.4px" width="10" height="10" viewBox="0 0 10 10"><path d="M2.8 4.8 H6.8" stroke="#3c3b37" stroke-width="1"/></svg>
<svg class="a" style="left:775.9px;top:19.4px" width="10" height="10" viewBox="0 0 10 10"><rect x="2.9" y="3.3" width="3.8" height="2.8" stroke="#3c3b37" stroke-width="0.9" fill="none"/></svg>
<svg class="a" style="left:787.7px;top:19.3px" width="10" height="10" viewBox="0 0 10 10"><path d="M3.3 3.3 L6.3 6.3 M6.3 3.3 L3.3 6.3" stroke="#3c2a20" stroke-width="1"/></svg>
</body></html>
